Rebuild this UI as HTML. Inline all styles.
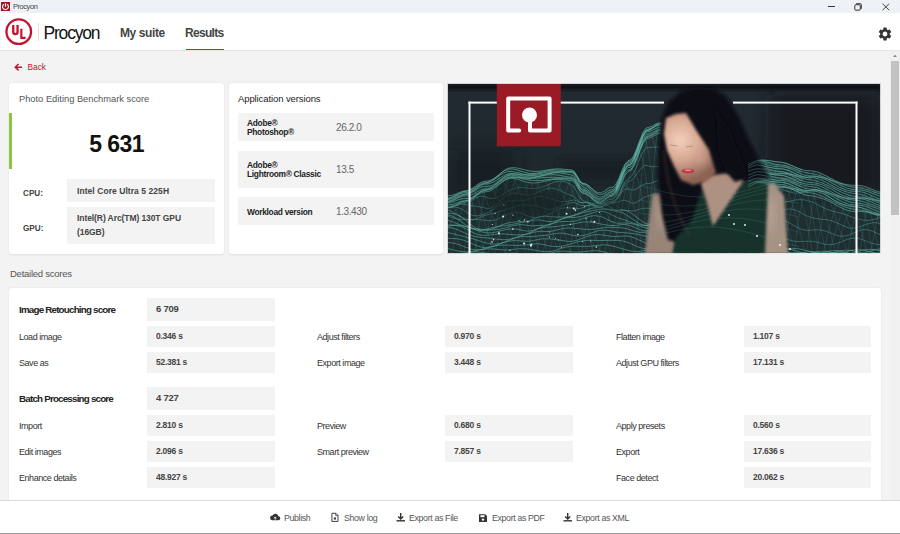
<!DOCTYPE html>
<html><head><meta charset="utf-8">
<style>
*{margin:0;padding:0;box-sizing:border-box}
html,body{width:900px;height:534px;overflow:hidden;background:#f3f3f3;font-family:"Liberation Sans",sans-serif;position:relative}
.a{position:absolute;white-space:nowrap}
#tb{left:0;top:0;width:900px;height:13px;background:#eef2f7}
#hd{left:0;top:13px;width:900px;height:38px;background:#fff;border-bottom:1px solid #e6e6e6}
.card{position:absolute;background:#fff;border-radius:3px;box-shadow:0 0.5px 2px rgba(0,0,0,.09)}
.box{position:absolute;background:#f3f3f3}
.lbl{position:absolute;white-space:nowrap;font-size:9px;color:#333;line-height:11px;letter-spacing:-0.45px;padding-top:0.7px}
.hl{position:absolute;white-space:nowrap;font-size:9.8px;font-weight:bold;color:#222;line-height:12px;letter-spacing:-0.8px}
.val{position:absolute;white-space:nowrap;font-size:8.5px;font-weight:bold;color:#444;line-height:11px;letter-spacing:-0.25px}
#ft{left:0;top:500px;width:900px;height:34px;background:#fff;border-top:1px solid #dcdcdc;border-bottom:1px solid #9a9a9a}
.fl{position:absolute;white-space:nowrap;font-size:8.8px;color:#555;line-height:11px;top:512.5px;letter-spacing:-0.35px}
.av{position:absolute;white-space:nowrap;font-size:8.4px;font-weight:bold;color:#222;line-height:9px;letter-spacing:-0.3px}
.avv{position:absolute;white-space:nowrap;font-size:10px;color:#666;line-height:12px;letter-spacing:-0.4px}
</style></head><body>
<div class="a" id="tb"></div>
<svg class="a" style="left:0;top:0" width="12" height="13" viewBox="0 0 12 13">
<rect x="1" y="2" width="9" height="9" fill="#a8101e"/>
<path d="M3.84 4.3 A2.9 2.9 0 1 0 7.16 4.3" fill="none" stroke="#fff" stroke-width="1.1"/>
<path d="M5.5 3.4 V6.6" stroke="#fff" stroke-width="1.2"/>
</svg>
<div class="a" style="left:13px;top:2px;font-size:7.5px;color:#444;line-height:10px;letter-spacing:-0.45px">Procyon</div>
<div class="a" style="left:828px;top:6px;width:7px;height:1px;background:#333"></div>
<svg class="a" style="left:853px;top:2px" width="10" height="10" viewBox="0 0 10 10">
<rect x="1.8" y="2.7" width="5.5" height="5.5" rx="1" fill="none" stroke="#333" stroke-width="1"/>
<path d="M3.2 1.7 H7.3 A1 1 0 0 1 8.3 2.7 V6.8" fill="none" stroke="#333" stroke-width="1"/>
</svg>
<svg class="a" style="left:881px;top:2px" width="10" height="10" viewBox="0 0 10 10">
<path d="M1.5 1.7 L8.2 8.2 M8.2 1.7 L1.5 8.2" stroke="#333" stroke-width="0.9"/>
</svg>

<div class="a" id="hd"></div>
<svg class="a" style="left:0;top:13px" width="40" height="37" viewBox="0 13 40 37">
<circle cx="18.75" cy="31.65" r="12.3" fill="none" stroke="#c8102e" stroke-width="2.3"/>
<path d="M13.25 24.9 V31.9 A2.15 2.15 0 0 0 17.55 31.9 V24.9" fill="none" stroke="#c8102e" stroke-width="2.3"/>
<path d="M21.35 28.8 V37.9 H25.6" fill="none" stroke="#c8102e" stroke-width="2.1"/>
</svg>
<div class="a" style="left:38px;top:23px;width:1px;height:18px;background:#ddd"></div>
<div class="a" style="left:43.5px;top:20.5px;font-size:17.5px;color:#111;line-height:24px;letter-spacing:-1.2px">Procyon</div>
<div class="a" style="left:120px;top:26px;font-size:12px;font-weight:bold;color:#444;line-height:14px;letter-spacing:-0.4px">My suite</div>
<div class="a" style="left:185px;top:26px;font-size:12px;font-weight:bold;color:#444;line-height:14px;letter-spacing:-0.7px">Results</div>
<div class="a" style="left:185.5px;top:48.8px;width:38.5px;height:1.5px;background:#c92a3e"></div>
<svg class="a" style="left:877px;top:26px" width="16" height="16" viewBox="0 0 24 24">
<path fill="#333" d="M19.14 12.94c.04-.3.06-.61.06-.94 0-.32-.02-.64-.07-.94l2.03-1.58a.49.49 0 0 0 .12-.61l-1.92-3.32a.488.488 0 0 0-.59-.22l-2.39.96c-.5-.38-1.03-.7-1.62-.94l-.36-2.54a.484.484 0 0 0-.48-.41h-3.84c-.24 0-.43.17-.47.41l-.36 2.54c-.59.24-1.13.57-1.62.94l-2.39-.96c-.22-.08-.47 0-.59.22L2.74 8.87c-.12.21-.08.47.12.61l2.03 1.58c-.05.3-.09.63-.09.94s.02.64.07.94l-2.03 1.58a.49.49 0 0 0-.12.61l1.92 3.32c.12.22.37.29.59.22l2.39-.96c.5.38 1.03.7 1.62.94l.36 2.54c.05.24.24.41.48.41h3.84c.24 0 .44-.17.47-.41l.36-2.54c.59-.24 1.13-.56 1.62-.94l2.39.96c.22.08.47 0 .59-.22l1.92-3.32c.12-.22.07-.47-.12-.61l-2.01-1.58zM12 15.6c-1.98 0-3.6-1.62-3.6-3.6s1.62-3.6 3.6-3.6 3.6 1.62 3.6 3.6-1.62 3.6-3.6 3.6z"/>
</svg>

<!-- Back -->
<svg class="a" style="left:13px;top:62px" width="11" height="10" viewBox="0 0 11 10">
<path d="M9 5.2 H2.5 M5.6 2 L2.3 5.2 L5.6 8.4" fill="none" stroke="#c8102e" stroke-width="1.5"/>
</svg>
<div class="a" style="left:27.5px;top:62px;font-size:8.3px;color:#c8102e;line-height:11px">Back</div>

<!-- Card 1 -->
<div class="card" style="left:9px;top:83px;width:215px;height:171px"></div>
<div class="a" style="left:19px;top:94px;font-size:9.3px;color:#555;line-height:11px">Photo Editing Benchmark score</div>
<div class="a" style="left:9px;top:113px;width:3px;height:56px;background:#8cc63f"></div>
<div class="a" style="left:89.3px;top:130.5px;font-size:23px;font-weight:bold;color:#111;line-height:26px;letter-spacing:-0.6px">5 631</div>
<div class="box" style="left:67px;top:179px;width:148px;height:23px"></div>
<div class="box" style="left:67px;top:207px;width:148px;height:37px"></div>
<div class="a" style="left:23px;top:188px;font-size:8.2px;font-weight:bold;color:#444;line-height:11px">CPU:</div>
<div class="a" style="left:23px;top:223px;font-size:8.2px;font-weight:bold;color:#444;line-height:11px">GPU:</div>
<div class="a" style="left:77px;top:185.5px;font-size:8.5px;font-weight:bold;color:#444;line-height:11px;letter-spacing:0.06px">Intel Core Ultra 5 225H</div>
<div class="a" style="left:77px;top:212px;font-size:8.5px;font-weight:bold;color:#444;line-height:13.5px;white-space:normal;width:140px;letter-spacing:-0.08px">Intel(R) Arc(TM) 130T GPU<br>(16GB)</div>

<!-- Card 2 -->
<div class="card" style="left:229px;top:83px;width:214px;height:171px"></div>
<div class="a" style="left:238px;top:93px;font-size:9.5px;color:#222;line-height:11px;letter-spacing:-0.1px">Application versions</div>
<div class="box" style="left:238px;top:113px;width:196px;height:28px"></div>
<div class="box" style="left:238px;top:151px;width:196px;height:37px"></div>
<div class="box" style="left:238px;top:197px;width:196px;height:28px"></div>
<div class="av" style="left:247px;top:118.5px">Adobe®<br>Photoshop®</div>
<div class="avv" style="left:336px;top:122px">26.2.0</div>
<div class="av" style="left:247px;top:160.7px">Adobe®<br>Lightroom® Classic</div>
<div class="avv" style="left:336px;top:164px">13.5</div>
<div class="av" style="left:247px;top:208px">Workload version</div>
<div class="avv" style="left:336px;top:206px">1.3.430</div>

<!-- Image -->
<!--IMG-->
<svg class="a" style="left:447px;top:83px" width="434" height="171" viewBox="0 0 434 171">
<defs><filter id="b1" x="-30%" y="-30%" width="160%" height="160%"><feGaussianBlur stdDeviation="1.5"/></filter><filter id="b2" x="-30%" y="-30%" width="160%" height="160%"><feGaussianBlur stdDeviation="4"/></filter><filter id="b3" x="-50%" y="-50%" width="200%" height="200%"><feGaussianBlur stdDeviation="8"/></filter><linearGradient id="bg" x1="0" y1="0" x2="0" y2="1"><stop offset="0" stop-color="#222b32"/><stop offset="0.5" stop-color="#1f282d"/><stop offset="1" stop-color="#1a2328"/></linearGradient><radialGradient id="fg" gradientUnits="userSpaceOnUse" cx="233" cy="57" r="42"><stop offset="0" stop-color="#f2d0bc"/><stop offset="0.5" stop-color="#d6a690"/><stop offset="1" stop-color="#8c6252"/></radialGradient></defs>
<rect width="434" height="171" fill="url(#bg)"/>
<rect x="0" y="1" width="434" height="6" fill="#0c1118" opacity="0.85" filter="url(#b1)"/>
<rect x="8" y="67" width="60" height="50" fill="#141a22" opacity="0.8" filter="url(#b3)"/>
<rect x="113" y="77" width="100" height="20" fill="#151b20" opacity="0.7" filter="url(#b2)"/>
<rect x="323" y="12" width="110" height="100" fill="#13181d" opacity="0.8" filter="url(#b3)"/>
<polygon points="-5.0,113.8 -1.0,112.8 3.0,112.4 7.0,111.0 11.0,109.2 15.0,107.6 19.0,107.0 23.0,106.1 27.0,103.9 31.0,101.1 35.0,98.9 39.0,98.0 43.0,97.2 47.0,95.1 51.0,92.1 55.0,89.1 59.0,86.7 63.0,85.5 67.0,85.7 71.0,86.3 75.0,87.2 79.0,88.0 83.0,88.4 87.0,88.3 91.0,87.9 95.0,87.2 99.0,86.5 103.0,85.9 107.0,85.5 111.0,85.5 115.0,85.8 119.0,86.2 123.0,86.5 127.0,87.6 131.0,94.2 135.0,99.7 139.0,100.8 143.0,104.0 147.0,108.0 151.0,110.6 155.0,110.6 159.0,108.0 163.0,105.4 167.0,104.1 171.0,97.2 175.0,87.2 179.0,79.1 183.0,76.8 187.0,71.7 191.0,61.9 195.0,51.5 199.0,44.9 203.0,43.7 207.0,41.5 211.0,39.3 215.0,39.3 219.0,41.7 223.0,46.0 227.0,51.5 231.0,57.3 235.0,62.4 239.0,65.8 243.0,67.0 247.0,67.8 251.0,70.0 255.0,73.2 259.0,76.9 263.0,80.5 267.0,83.3 271.0,84.8 275.0,84.9 279.0,84.5 283.0,83.6 287.0,82.6 291.0,81.7 295.0,81.1 299.0,80.9 303.0,79.7 307.0,77.9 311.0,77.0 315.0,77.2 319.0,77.9 323.0,78.7 327.0,79.5 331.0,79.9 335.0,80.1 339.0,80.8 343.0,82.0 347.0,83.6 351.0,85.2 355.0,86.7 359.0,87.7 363.0,88.0 367.0,88.3 371.0,89.1 375.0,90.4 379.0,92.0 383.0,94.0 387.0,96.0 391.0,98.0 395.0,99.8 399.0,101.3 403.0,102.4 407.0,102.9 411.0,103.1 415.0,103.6 419.0,104.6 423.0,105.9 427.0,107.4 431.0,108.8 435.0,110.0 439.0,110.7 440,175 -5,175" fill="#28524f" opacity="0.22"/>
<path d="M-5,113.2 L-2,112.7 L1,112.8 L4,112.6 L7,111.8 L10,110.6 L13,109.3 L16,108.3 L19,107.8 L22,107.2 L25,105.6 L28,103.5 L31,101.2 L34,99.4 L37,98.3 L40,98.1 L43,97.4 L46,96.0 L49,93.9 L52,91.5 L55,89.1 L58,86.9 L61,85.4 L64,84.7 L67,84.7 L70,85.0 L73,85.6 L76,86.4 L79,87.2 L82,87.8 L85,88.2 L88,88.4 L91,88.4 L94,88.1 L97,87.6 L100,87.1 L103,86.6 L106,86.2 L109,85.9 L112,85.9 L115,86.0 L118,86.3 L121,86.6 L124,86.9 L127,88.0 L130,92.8 L133,98.2 L136,100.4 L139,101.0 L142,103.0 L145,105.6 L148,108.1 L151,109.7 L154,109.8 L157,108.3 L160,106.1 L163,104.4 L166,104.1 L169,101.0 L172,94.8 L175,87.4 L178,81.1 L181,77.7 L184,76.6 L187,72.1 L190,64.9 L193,56.7 L196,49.5 L199,45.1 L202,44.2 L205,43.2 L208,41.4 L211,40.0 L214,39.9 L217,41.0 L220,43.3 L223,46.5 L226,50.3 L229,54.3 L232,58.2 L235,61.6 L238,64.1 L241,65.6 L244,65.9 L247,66.8 L250,68.5 L253,71.0 L256,73.9 L259,76.9 L262,79.8 L265,82.2 L268,84.0 L271,85.0 L274,85.1 L277,84.8 L280,84.3 L283,83.7 L286,83.1 L289,82.6 L292,82.2 L295,82.0 L298,82.0 L301,81.5 L304,80.2 L307,78.6 L310,77.5 L313,77.2 L316,77.1 L319,77.3 L322,77.7 L325,78.1 L328,78.6 L331,79.0 L334,79.2 L337,79.8 L340,80.6 L343,81.8 L346,83.1 L349,84.4 L352,85.6 L355,86.6 L358,87.3 L361,87.7 L364,87.8 L367,88.2 L370,88.9 L373,90.0 L376,91.4 L379,92.9 L382,94.5 L385,96.1 L388,97.6 L391,99.0 L394,100.1 L397,101.0 L400,101.7 L403,102.1 L406,102.3 L409,102.3 L412,102.4 L415,102.8 L418,103.6 L421,104.7 L424,105.9 L427,107.1 L430,108.2 L433,109.2 L436,109.9 L439,110.3 M-5,115.9 L-2,115.3 L1,115.1 L4,114.5 L7,113.2 L10,111.7 L13,110.1 L16,108.9 L19,108.4 L22,107.9 L25,106.5 L28,104.6 L31,102.5 L34,100.8 L37,99.7 L40,99.4 L43,98.5 L46,96.8 L49,94.5 L52,92.0 L55,89.5 L58,87.4 L61,86.2 L64,85.8 L67,86.2 L70,86.9 L73,87.9 L76,88.9 L79,89.8 L82,90.4 L85,90.6 L88,90.4 L91,90.0 L94,89.4 L97,88.7 L100,88.0 L103,87.5 L106,87.1 L109,87.1 L112,87.2 L115,87.5 L118,87.9 L121,88.1 L124,88.2 L127,89.1 L130,93.6 L133,98.7 L136,100.7 L139,101.2 L142,103.3 L145,106.2 L148,109.0 L151,111.0 L154,111.5 L157,110.5 L160,108.5 L163,107.0 L166,106.6 L169,103.3 L172,96.8 L175,89.1 L178,82.5 L181,78.9 L184,77.7 L187,73.3 L190,66.2 L193,58.2 L196,51.2 L199,46.9 L202,46.0 L205,44.8 L208,42.9 L211,41.2 L214,40.6 L217,41.4 L220,43.5 L223,46.6 L226,50.4 L229,54.7 L232,58.9 L235,62.7 L238,65.6 L241,67.5 L244,68.1 L247,69.1 L250,70.8 L253,73.2 L256,75.8 L259,78.7 L262,81.3 L265,83.7 L268,85.4 L271,86.5 L274,86.8 L277,86.8 L280,86.5 L283,86.1 L286,85.5 L289,84.9 L292,84.3 L295,83.7 L298,83.4 L301,82.5 L304,80.9 L307,79.2 L310,78.1 L313,78.0 L316,78.2 L319,78.8 L322,79.6 L325,80.4 L328,81.1 L331,81.6 L334,81.9 L337,82.3 L340,82.9 L343,83.9 L346,85.0 L349,86.2 L352,87.4 L355,88.5 L358,89.5 L361,90.1 L364,90.5 L367,91.0 L370,91.7 L373,92.7 L376,93.8 L379,94.9 L382,96.1 L385,97.3 L388,98.5 L391,99.6 L394,100.7 L397,101.7 L400,102.7 L403,103.4 L406,104.0 L409,104.3 L412,104.6 L415,105.2 L418,106.0 L421,106.9 L424,107.9 L427,109.0 L430,109.9 L433,110.9 L436,111.7 L439,112.3 M-5,117.4 L-2,116.4 L1,115.9 L4,115.1 L7,113.8 L10,112.3 L13,110.9 L16,110.0 L19,109.7 L22,109.3 L25,107.9 L28,106.0 L31,103.7 L34,101.8 L37,100.5 L40,99.9 L43,99.0 L46,97.4 L49,95.3 L52,93.0 L55,91.0 L58,89.4 L61,88.5 L64,88.4 L67,88.9 L70,89.6 L73,90.3 L76,91.0 L79,91.5 L82,91.7 L85,91.6 L88,91.3 L91,90.8 L94,90.3 L97,89.7 L100,89.2 L103,88.9 L106,88.7 L109,88.6 L112,88.6 L115,88.7 L118,88.7 L121,88.7 L124,88.6 L127,89.4 L130,93.9 L133,99.2 L136,101.6 L139,102.5 L142,105.0 L145,108.3 L148,111.4 L151,113.6 L154,114.1 L157,112.8 L160,110.6 L163,108.7 L166,108.0 L169,104.5 L172,97.8 L175,90.1 L178,83.6 L181,80.3 L184,79.2 L187,74.9 L190,67.9 L193,59.8 L196,52.6 L199,48.0 L202,46.8 L205,45.3 L208,43.1 L211,41.3 L214,40.8 L217,41.7 L220,44.1 L223,47.6 L226,51.9 L229,56.6 L232,61.1 L235,65.1 L238,68.0 L241,69.7 L244,70.1 L247,70.8 L250,72.3 L253,74.5 L256,77.1 L259,80.0 L262,82.9 L265,85.4 L268,87.4 L271,88.7 L274,89.1 L277,89.0 L280,88.5 L283,87.8 L286,86.8 L289,85.9 L292,85.0 L295,84.3 L298,83.9 L301,83.3 L304,81.9 L307,80.6 L310,80.0 L313,80.2 L316,80.7 L319,81.5 L322,82.3 L325,83.0 L328,83.5 L331,83.8 L334,83.8 L337,84.1 L340,84.7 L343,85.8 L346,87.1 L349,88.5 L352,90.0 L355,91.2 L358,92.2 L361,92.8 L364,92.9 L367,93.0 L370,93.4 L373,93.9 L376,94.6 L379,95.6 L382,96.7 L385,98.0 L388,99.4 L391,100.9 L394,102.4 L397,103.8 L400,105.0 L403,105.9 L406,106.5 L409,106.7 L412,106.8 L415,107.2 L418,107.8 L421,108.7 L424,109.7 L427,110.9 L430,112.1 L433,113.3 L436,114.4 L439,115.2 M-5,117.9 L-2,116.9 L1,116.6 L4,116.0 L7,114.9 L10,113.6 L13,112.3 L16,111.4 L19,111.0 L22,110.3 L25,108.8 L28,106.6 L31,104.3 L34,102.4 L37,101.2 L40,101.0 L43,100.5 L46,99.3 L49,97.6 L52,95.6 L55,93.7 L58,92.0 L61,90.9 L64,90.5 L67,90.6 L70,90.9 L73,91.3 L76,91.8 L79,92.2 L82,92.5 L85,92.5 L88,92.4 L91,92.1 L94,91.7 L97,91.2 L100,90.6 L103,90.1 L106,89.6 L109,89.2 L112,89.0 L115,89.0 L118,89.1 L121,89.2 L124,89.4 L127,90.6 L130,95.6 L133,101.3 L136,104.0 L139,105.1 L142,107.6 L145,110.7 L148,113.6 L151,115.4 L154,115.6 L157,114.0 L160,111.6 L163,109.7 L166,109.0 L169,105.7 L172,99.2 L175,91.7 L178,85.3 L181,81.9 L184,80.7 L187,76.1 L190,68.8 L193,60.4 L196,52.9 L199,48.2 L202,47.0 L205,45.6 L208,43.7 L211,42.3 L214,42.2 L217,43.6 L220,46.3 L223,50.0 L226,54.4 L229,58.9 L232,63.2 L235,66.9 L238,69.5 L241,71.0 L244,71.3 L247,72.0 L250,73.6 L253,76.0 L256,78.9 L259,81.9 L262,84.9 L265,87.4 L268,89.3 L271,90.2 L274,90.3 L277,89.8 L280,89.1 L283,88.2 L286,87.3 L289,86.4 L292,85.9 L295,85.6 L298,85.7 L301,85.5 L304,84.5 L307,83.4 L310,82.7 L313,82.9 L316,83.2 L319,83.7 L322,84.3 L325,84.8 L328,85.3 L331,85.7 L334,85.8 L337,86.3 L340,87.2 L343,88.4 L346,89.8 L349,91.2 L352,92.4 L355,93.3 L358,93.9 L361,94.0 L364,93.8 L367,93.7 L370,93.9 L373,94.5 L376,95.5 L379,96.8 L382,98.3 L385,100.0 L388,101.7 L391,103.4 L394,104.9 L397,106.2 L400,107.2 L403,107.9 L406,108.3 L409,108.4 L412,108.6 L415,109.1 L418,109.9 L421,111.0 L424,112.4 L427,113.7 L430,115.1 L433,116.2 L436,117.1 L439,117.5 M-5,119.0 L-2,118.2 L1,118.0 L4,117.4 L7,116.3 L10,114.8 L13,113.3 L16,112.1 L19,111.6 L22,111.0 L25,109.5 L28,107.6 L31,105.7 L34,104.2 L37,103.5 L40,103.5 L43,103.2 L46,101.9 L49,100.1 L52,97.8 L55,95.4 L58,93.4 L61,91.9 L64,91.3 L67,91.3 L70,91.6 L73,92.2 L76,92.9 L79,93.5 L82,93.9 L85,94.0 L88,93.8 L91,93.4 L94,92.7 L97,92.0 L100,91.2 L103,90.5 L106,90.0 L109,89.8 L112,89.9 L115,90.2 L118,90.7 L121,91.3 L124,91.8 L127,93.2 L130,98.2 L133,103.8 L136,106.2 L139,107.0 L142,109.1 L145,111.9 L148,114.6 L151,116.3 L154,116.5 L157,115.1 L160,112.9 L163,111.2 L166,110.6 L169,107.3 L172,100.7 L175,92.9 L178,86.2 L181,82.5 L184,81.1 L187,76.3 L190,69.0 L193,60.7 L196,53.5 L199,49.2 L202,48.4 L205,47.5 L208,45.9 L211,44.7 L214,44.7 L217,46.0 L220,48.5 L223,51.9 L226,55.9 L229,60.2 L232,64.4 L235,68.0 L238,70.8 L241,72.4 L244,72.9 L247,73.8 L250,75.4 L253,77.8 L256,80.6 L259,83.4 L262,86.0 L265,88.2 L268,89.8 L271,90.6 L274,90.6 L277,90.3 L280,89.8 L283,89.4 L286,88.9 L289,88.5 L292,88.3 L295,88.3 L298,88.5 L301,88.3 L304,87.1 L307,85.7 L310,84.8 L313,84.8 L316,85.0 L319,85.5 L322,86.2 L325,87.0 L328,87.7 L331,88.2 L334,88.5 L337,88.9 L340,89.6 L343,90.5 L346,91.5 L349,92.4 L352,93.3 L355,94.0 L358,94.4 L361,94.7 L364,94.6 L367,94.9 L370,95.5 L373,96.5 L376,97.8 L379,99.3 L382,100.9 L385,102.5 L388,104.1 L391,105.5 L394,106.9 L397,108.0 L400,109.0 L403,109.8 L406,110.4 L409,110.7 L412,111.1 L415,111.8 L418,112.8 L421,113.9 L424,115.0 L427,116.1 L430,117.0 L433,117.7 L436,118.1 L439,118.3 M-5,120.4 L-2,119.5 L1,119.0 L4,118.3 L7,117.0 L10,115.5 L13,114.1 L16,113.2 L19,113.0 L22,112.8 L25,111.7 L28,110.1 L31,108.4 L34,106.9 L37,106.0 L40,105.8 L43,105.0 L46,103.3 L49,101.1 L52,98.5 L55,96.1 L58,94.0 L61,92.7 L64,92.2 L67,92.4 L70,92.9 L73,93.6 L76,94.3 L79,94.8 L82,95.0 L85,94.8 L88,94.4 L91,93.8 L94,93.2 L97,92.5 L100,92.0 L103,91.7 L106,91.6 L109,91.8 L112,92.3 L115,92.8 L118,93.4 L121,93.9 L124,94.1 L127,95.2 L130,99.8 L133,105.0 L136,107.2 L139,107.9 L142,110.0 L145,112.9 L148,115.8 L151,117.7 L154,118.0 L157,116.7 L160,114.4 L163,112.5 L166,111.7 L169,108.0 L172,101.2 L175,93.2 L178,86.4 L181,82.8 L184,81.7 L187,77.3 L190,70.4 L193,62.5 L196,55.7 L199,51.6 L202,50.9 L205,50.0 L208,48.2 L211,46.7 L214,46.4 L217,47.4 L220,49.7 L223,53.0 L226,57.1 L229,61.5 L232,65.8 L235,69.6 L238,72.5 L241,74.2 L244,74.5 L247,75.2 L250,76.5 L253,78.6 L256,81.0 L259,83.6 L262,86.2 L265,88.5 L268,90.4 L271,91.6 L274,92.0 L277,92.2 L280,92.2 L283,92.0 L286,91.6 L289,91.2 L292,90.9 L295,90.7 L298,90.7 L301,90.2 L304,88.9 L307,87.5 L310,86.7 L313,86.8 L316,87.3 L319,88.0 L322,88.8 L325,89.5 L328,90.1 L331,90.3 L334,90.2 L337,90.3 L340,90.6 L343,91.2 L346,92.0 L349,93.0 L352,94.1 L355,95.1 L358,96.0 L361,96.6 L364,96.9 L367,97.4 L370,98.2 L373,99.1 L376,100.3 L379,101.6 L382,102.9 L385,104.4 L388,105.9 L391,107.4 L394,108.9 L397,110.3 L400,111.5 L403,112.5 L406,113.2 L409,113.5 L412,113.8 L415,114.2 L418,114.7 L421,115.4 L424,116.1 L427,116.9 L430,117.6 L433,118.3 L436,118.9 L439,119.4 M-5,121.2 L-2,120.2 L1,119.9 L4,119.3 L7,118.4 L10,117.2 L13,116.2 L16,115.6 L19,115.6 L22,115.4 L25,114.3 L28,112.4 L31,110.3 L34,108.3 L37,107.0 L40,106.5 L43,105.6 L46,103.9 L49,101.7 L52,99.4 L55,97.1 L58,95.3 L61,94.1 L64,93.7 L67,93.8 L70,94.1 L73,94.5 L76,95.0 L79,95.3 L82,95.5 L85,95.4 L88,95.2 L91,95.0 L94,94.7 L97,94.5 L100,94.3 L103,94.3 L106,94.3 L109,94.4 L112,94.6 L115,94.8 L118,95.0 L121,95.1 L124,95.1 L127,96.0 L130,100.6 L133,105.9 L136,108.3 L139,109.1 L142,111.4 L145,114.5 L148,117.3 L151,119.0 L154,119.1 L157,117.5 L160,114.9 L163,112.8 L166,111.9 L169,108.3 L172,101.7 L175,94.1 L178,87.8 L181,84.7 L184,83.9 L187,79.8 L190,72.9 L193,65.1 L196,58.1 L199,53.7 L202,52.6 L205,51.4 L208,49.3 L211,47.7 L214,47.4 L217,48.6 L220,51.0 L223,54.5 L226,58.7 L229,63.2 L232,67.5 L235,71.0 L238,73.6 L241,74.9 L244,75.0 L247,75.4 L250,76.6 L253,78.7 L256,81.4 L259,84.5 L262,87.5 L265,90.3 L268,92.6 L271,94.1 L274,94.7 L277,94.9 L280,94.7 L283,94.3 L286,93.7 L289,93.1 L292,92.6 L295,92.4 L298,92.4 L301,92.2 L304,91.0 L307,89.8 L310,89.2 L313,89.3 L316,89.7 L319,90.1 L322,90.6 L325,90.9 L328,91.1 L331,91.1 L334,90.8 L337,90.9 L340,91.4 L343,92.3 L346,93.5 L349,95.0 L352,96.4 L355,97.7 L358,98.7 L361,99.3 L364,99.5 L367,99.8 L370,100.3 L373,101.1 L376,102.1 L379,103.4 L382,104.9 L385,106.5 L388,108.3 L391,110.0 L394,111.6 L397,113.0 L400,114.1 L403,114.8 L406,115.2 L409,115.1 L412,114.9 L415,115.0 L418,115.3 L421,116.0 L424,116.8 L427,117.8 L430,119.0 L433,120.0 L436,121.0 L439,121.7 M-5,122.5 L-2,121.9 L1,121.9 L4,121.7 L7,121.0 L10,119.9 L13,118.8 L16,117.9 L19,117.5 L22,116.9 L25,115.3 L28,113.1 L31,110.8 L34,108.8 L37,107.6 L40,107.2 L43,106.5 L46,105.1 L49,103.1 L52,100.8 L55,98.5 L58,96.5 L61,95.1 L64,94.5 L67,94.4 L70,94.7 L73,95.2 L76,95.8 L79,96.5 L82,97.0 L85,97.4 L88,97.6 L91,97.6 L94,97.4 L97,97.1 L100,96.7 L103,96.3 L106,95.9 L109,95.7 L112,95.6 L115,95.6 L118,95.7 L121,95.9 L124,96.0 L127,97.2 L130,101.9 L133,107.4 L136,109.7 L139,110.5 L142,112.6 L145,115.3 L148,117.9 L151,119.4 L154,119.4 L157,117.9 L160,115.5 L163,113.7 L166,113.3 L169,110.1 L172,103.9 L175,96.6 L178,90.4 L181,87.2 L184,86.3 L187,81.9 L190,74.7 L193,66.5 L196,59.2 L199,54.7 L202,53.6 L205,52.4 L208,50.6 L211,49.2 L214,49.0 L217,50.2 L220,52.6 L223,56.0 L226,59.9 L229,64.0 L232,68.0 L235,71.3 L238,73.8 L241,75.1 L244,75.3 L247,76.0 L250,77.7 L253,80.3 L256,83.5 L259,86.8 L262,90.1 L265,92.9 L268,95.0 L271,96.3 L274,96.7 L277,96.6 L280,96.3 L283,95.8 L286,95.3 L289,94.8 L292,94.6 L295,94.6 L298,94.8 L301,94.6 L304,93.4 L307,92.0 L310,91.0 L313,90.8 L316,90.7 L319,90.9 L322,91.2 L325,91.5 L328,91.9 L331,92.1 L334,92.3 L337,92.7 L340,93.7 L343,94.9 L346,96.3 L349,97.7 L352,99.1 L355,100.1 L358,100.9 L361,101.3 L364,101.3 L367,101.6 L370,102.2 L373,103.1 L376,104.4 L379,105.9 L382,107.5 L385,109.2 L388,110.9 L391,112.3 L394,113.6 L397,114.6 L400,115.3 L403,115.7 L406,115.8 L409,115.6 L412,115.6 L415,115.9 L418,116.7 L421,117.7 L424,118.9 L427,120.2 L430,121.5 L433,122.5 L436,123.4 L439,123.9 M-5,125.1 L-2,124.6 L1,124.5 L4,124.0 L7,122.9 L10,121.4 L13,119.9 L16,118.6 L19,118.0 L22,117.3 L25,115.8 L28,113.8 L31,111.7 L34,109.9 L37,108.9 L40,108.7 L43,108.0 L46,106.4 L49,104.2 L52,101.7 L55,99.2 L58,97.2 L61,95.8 L64,95.3 L67,95.5 L70,96.2 L73,97.1 L76,98.1 L79,99.0 L82,99.7 L85,100.0 L88,100.0 L91,99.7 L94,99.1 L97,98.4 L100,97.7 L103,97.1 L106,96.6 L109,96.4 L112,96.4 L115,96.7 L118,97.0 L121,97.3 L124,97.5 L127,98.6 L130,103.2 L133,108.4 L136,110.4 L139,111.0 L142,113.0 L145,115.7 L148,118.5 L151,120.3 L154,120.7 L157,119.6 L160,117.7 L163,116.2 L166,115.9 L169,112.7 L172,106.4 L175,98.8 L178,92.2 L181,88.7 L184,87.4 L187,82.8 L190,75.6 L193,67.5 L196,60.4 L199,56.0 L202,55.1 L205,54.0 L208,52.2 L211,50.6 L214,50.2 L217,51.1 L220,53.2 L223,56.3 L226,60.1 L229,64.2 L232,68.3 L235,72.0 L238,74.8 L241,76.6 L244,77.3 L247,78.3 L250,80.2 L253,82.9 L256,85.9 L259,89.1 L262,92.0 L265,94.6 L268,96.5 L271,97.7 L274,98.1 L277,98.2 L280,98.0 L283,97.8 L286,97.4 L289,97.1 L292,96.8 L295,96.7 L298,96.6 L301,96.1 L304,94.5 L307,92.8 L310,91.6 L313,91.4 L316,91.5 L319,91.9 L322,92.6 L325,93.4 L328,94.1 L331,94.7 L334,95.1 L337,95.6 L340,96.4 L343,97.4 L346,98.6 L349,99.8 L352,100.9 L355,101.9 L358,102.7 L361,103.3 L364,103.5 L367,104.0 L370,104.7 L373,105.8 L376,107.0 L379,108.2 L382,109.6 L385,110.9 L388,112.1 L391,113.2 L394,114.2 L397,115.1 L400,115.9 L403,116.6 L406,117.0 L409,117.3 L412,117.6 L415,118.3 L418,119.2 L421,120.3 L424,121.4 L427,122.5 L430,123.6 L433,124.5 L436,125.2 L439,125.7 M301,96.7 L304,95.2 L307,93.8 L310,93.0 L313,93.2 L316,93.7 L319,94.5 L322,95.4 L325,96.3 L328,97.0 L331,97.3 L334,97.4 L337,97.7 L340,98.3 L343,99.2 L346,100.4 L349,101.7 L352,103.0 L355,104.2 L358,105.2 L361,105.8 L364,106.1 L367,106.3 L370,106.8 L373,107.4 L376,108.2 L379,109.1 L382,110.2 L385,111.4 L388,112.7 L391,114.1 L394,115.4 L397,116.8 L400,118.0 L403,118.9 L406,119.6 L409,120.0 L412,120.2 L415,120.7 L418,121.4 L421,122.3 L424,123.3 L427,124.3 L430,125.4 L433,126.5 L436,127.5 L439,128.2 M301,98.5 L304,97.5 L307,96.4 L310,95.9 L313,96.1 L316,96.6 L319,97.2 L322,97.9 L325,98.5 L328,98.9 L331,99.1 L334,99.2 L337,99.5 L340,100.3 L343,101.4 L346,102.8 L349,104.2 L352,105.5 L355,106.6 L358,107.3 L361,107.5 L364,107.4 L367,107.3 L370,107.5 L373,108.0 L376,108.8 L379,110.0 L382,111.4 L385,113.0 L388,114.7 L391,116.4 L394,118.1 L397,119.5 L400,120.6 L403,121.5 L406,121.9 L409,122.0 L412,122.1 L415,122.5 L418,123.2 L421,124.2 L424,125.4 L427,126.8 L430,128.1 L433,129.3 L436,130.2 L439,130.8 M301,101.5 L304,100.5 L307,99.2 L310,98.4 L313,98.4 L316,98.6 L319,99.0 L322,99.6 L325,100.2 L328,100.8 L331,101.2 L334,101.5 L337,101.9 L340,102.7 L343,103.7 L346,104.9 L349,105.9 L352,106.9 L355,107.6 L358,108.0 L361,108.1 L364,108.0 L367,108.1 L370,108.6 L373,109.5 L376,110.8 L379,112.3 L382,114.0 L385,115.8 L388,117.5 L391,119.1 L394,120.5 L397,121.6 L400,122.6 L403,123.3 L406,123.7 L409,124.0 L412,124.2 L415,124.9 L418,125.8 L421,126.9 L424,128.1 L427,129.3 L430,130.4 L433,131.2 L436,131.7 L439,131.9 M301,103.8 L304,102.5 L307,101.0 L310,100.1 L313,100.1 L316,100.4 L319,101.0 L322,101.8 L325,102.5 L328,103.2 L331,103.5 L334,103.6 L337,103.7 L340,104.2 L343,104.8 L346,105.6 L349,106.5 L352,107.5 L355,108.4 L358,109.1 L361,109.6 L364,109.9 L367,110.4 L370,111.3 L373,112.4 L376,113.6 L379,115.1 L382,116.5 L385,118.0 L388,119.5 L391,120.9 L394,122.3 L397,123.5 L400,124.6 L403,125.5 L406,126.2 L409,126.5 L412,126.9 L415,127.4 L418,128.1 L421,128.9 L424,129.7 L427,130.5 L430,131.2 L433,131.8 L436,132.3 L439,132.6 M301,105.4 L304,104.2 L307,102.9 L310,102.2 L313,102.3 L316,102.7 L319,103.3 L322,103.9 L325,104.4 L328,104.7 L331,104.7 L334,104.4 L337,104.4 L340,104.8 L343,105.6 L346,106.7 L349,108.0 L352,109.4 L355,110.7 L358,111.8 L361,112.5 L364,112.8 L367,113.2 L370,113.9 L373,114.7 L376,115.7 L379,116.9 L382,118.3 L385,119.8 L388,121.4 L391,123.0 L394,124.6 L397,126.0 L400,127.2 L403,128.0 L406,128.5 L409,128.5 L412,128.4 L415,128.6 L418,128.9 L421,129.5 L424,130.2 L427,131.1 L430,132.1 L433,133.1 L436,134.0 L439,134.7" fill="none" stroke="#6ccab9" stroke-width="0.7" opacity="0.75"/>
<path d="M-5,123.9 L-2,123.3 L1,123.3 L4,123.3 L7,122.8 L10,121.9 L13,120.8 L16,119.9 L19,119.2 L22,118.4 L25,117.0 L28,115.4 L31,114.0 L34,113.2 L37,113.4 L40,114.5 L43,115.4 L46,115.5 L49,114.9 L52,113.7 L55,111.9 L58,110.0 L61,108.2 L64,106.7 L67,105.7 L70,104.9 L73,104.6 L76,104.6 L79,104.9 L82,105.3 L85,105.4 L88,105.4 L91,105.1 L94,104.4 L97,103.5 L100,102.3 L103,101.0 L106,99.7 L109,98.7 L112,98.2 L115,98.3 L118,98.9 L121,100.1 L124,101.5 L127,103.8 L130,109.1 L133,114.8 L136,117.5 L139,118.5 L142,120.1 L145,122.0 L148,123.6 L151,124.2 L154,123.7 L157,122.0 L160,120.0 L163,118.6 L166,118.4 L169,116.0 L172,110.8 L175,104.5 L178,98.9 L181,95.6 L184,93.9 L187,89.4 L190,82.5 L193,75.0 L196,68.6 L199,64.8 L202,64.4 L205,64.2 L208,63.9 L211,64.1 L214,65.5 L217,67.9 L220,71.1 L223,74.7 L226,78.5 L229,82.2 L232,85.5 L235,88.2 L238,90.3 L241,91.5 L244,92.0 L247,92.9 L250,94.7 L253,97.0 L256,99.5 L259,101.9 L262,103.9 L265,105.2 L268,105.7 L271,105.3 L274,104.2 L277,102.9 L280,101.7 L283,100.9 L286,100.5 L289,100.6 L292,101.2 L295,102.2 L298,103.5 L301,104.3 L304,104.2 L307,103.6 L310,103.2 L313,103.0 L316,102.9 L319,103.0 L322,103.3 L325,103.8 L328,104.5 L331,105.3 L334,106.1 L337,107.0 L340,108.1 L343,109.1 L346,109.8 L349,110.2 L352,110.1 L355,109.6 L358,108.8 L361,107.7 L364,106.8 L367,106.3 L370,106.7 L373,107.7 L376,109.4 L379,111.5 L382,113.7 L385,116.0 L388,118.0 L391,119.6 L394,120.9 L397,121.7 L400,122.3 L403,122.7 L406,123.0 L409,123.4 L412,124.0 L415,125.2 L418,126.7 L421,128.3 L424,129.9 L427,131.2 L430,131.9 L433,132.1 L436,131.7 L439,130.8 M-5,125.7 L-2,125.4 L1,125.1 L4,124.5 L7,123.5 L10,122.3 L13,121.4 L16,121.0 L19,121.4 L22,122.2 L25,122.7 L28,123.2 L31,123.6 L34,124.1 L37,124.8 L40,125.4 L43,125.3 L46,124.0 L49,121.8 L52,119.1 L55,116.2 L58,113.6 L61,111.6 L64,110.5 L67,110.1 L70,110.3 L73,110.8 L76,111.5 L79,112.0 L82,112.1 L85,111.6 L88,110.5 L91,109.2 L94,107.8 L97,106.6 L100,105.7 L103,105.2 L106,105.3 L109,105.8 L112,106.9 L115,108.3 L118,109.9 L121,111.3 L124,112.3 L127,113.4 L130,116.4 L133,119.3 L136,119.8 L139,119.2 L142,119.6 L145,120.6 L148,121.9 L151,122.9 L154,123.2 L157,122.7 L160,121.6 L163,120.8 L166,120.5 L169,117.9 L172,112.9 L175,106.8 L178,101.5 L181,98.6 L184,97.5 L187,94.8 L190,90.8 L193,86.7 L196,83.5 L199,82.2 L202,83.2 L205,83.8 L208,83.7 L211,83.5 L214,83.8 L217,84.7 L220,86.3 L223,88.4 L226,91.1 L229,94.2 L232,97.4 L235,100.5 L238,103.2 L241,105.0 L244,105.9 L247,106.8 L250,107.7 L253,108.6 L256,109.4 L259,110.1 L262,110.7 L265,111.1 L268,111.6 L271,111.9 L274,112.3 L277,113.0 L280,113.9 L283,115.0 L286,116.1 L289,117.1 L292,117.9 L295,118.4 L298,118.8 L301,118.5 L304,117.4 L307,116.2 L310,115.4 L313,115.3 L316,115.6 L319,116.4 L322,117.4 L325,118.4 L328,119.3 L331,119.8 L334,119.7 L337,119.3 L340,118.8 L343,118.1 L346,117.5 L349,117.0 L352,116.7 L355,116.8 L358,117.1 L361,117.8 L364,118.6 L367,119.8 L370,121.3 L373,123.0 L376,124.5 L379,125.9 L382,127.0 L385,127.9 L388,128.7 L391,129.4 L394,130.2 L397,131.1 L400,132.2 L403,133.3 L406,134.5 L409,135.4 L412,136.2 L415,136.9 L418,137.3 L421,137.3 L424,137.0 L427,136.4 L430,135.6 L433,134.8 L436,134.1 L439,133.6 M-5,126.3 L-2,125.3 L1,124.7 L4,124.3 L7,124.1 L10,124.4 L13,125.3 L16,126.8 L19,128.8 L22,130.9 L25,132.2 L28,132.8 L31,132.7 L34,132.1 L37,131.2 L40,130.1 L43,128.5 L46,126.4 L49,124.2 L52,122.0 L55,120.2 L58,118.8 L61,118.1 L64,117.8 L67,117.8 L70,117.9 L73,117.8 L76,117.6 L79,117.1 L82,116.3 L85,115.2 L88,114.2 L91,113.4 L94,113.2 L97,113.6 L100,114.5 L103,115.5 L106,116.6 L109,117.5 L112,118.2 L115,118.5 L118,118.5 L121,118.2 L124,117.5 L127,116.9 L130,118.0 L133,119.5 L136,119.7 L139,119.5 L142,120.2 L145,121.6 L148,123.0 L151,123.9 L154,123.9 L157,123.0 L160,121.5 L163,120.1 L166,119.2 L169,116.8 L172,113.0 L175,109.0 L178,106.2 L181,105.7 L184,106.9 L187,106.8 L190,105.6 L193,103.6 L196,101.8 L199,100.6 L202,100.6 L205,99.8 L208,98.6 L211,97.5 L214,97.1 L217,97.8 L220,99.4 L223,101.9 L226,105.0 L229,108.4 L232,111.6 L235,114.4 L238,116.3 L241,117.2 L244,117.0 L247,116.6 L250,116.4 L253,116.3 L256,116.7 L259,117.7 L262,119.2 L265,121.1 L268,123.2 L271,125.2 L274,127.0 L277,128.6 L280,129.8 L283,130.6 L286,130.9 L289,130.8 L292,130.5 L295,130.2 L298,130.0 L301,129.8 L304,129.4 L307,129.1 L310,129.3 L313,129.8 L316,130.5 L319,131.0 L322,131.2 L325,131.0 L328,130.4 L331,129.3 L334,128.0 L337,126.9 L340,126.2 L343,126.0 L346,126.4 L349,127.4 L352,128.8 L355,130.4 L358,132.1 L361,133.5 L364,134.4 L367,135.2 L370,135.7 L373,136.1 L376,136.4 L379,136.7 L382,137.2 L385,138.0 L388,139.0 L391,140.3 L394,141.8 L397,143.2 L400,144.4 L403,145.1 L406,145.3 L409,144.9 L412,144.1 L415,143.0 L418,141.8 L421,140.8 L424,140.1 L427,139.7 L430,139.8 L433,140.4 L436,141.3 L439,142.3 M-5,126.2 L-2,126.3 L1,127.0 L4,128.2 L7,129.7 L10,131.3 L13,133.0 L16,134.6 L19,136.1 L22,136.9 L25,137.0 L28,136.3 L31,135.2 L34,133.9 L37,132.7 L40,131.9 L43,131.1 L46,130.3 L49,129.5 L52,128.6 L55,127.7 L58,126.8 L61,125.8 L64,124.9 L67,123.9 L70,123.0 L73,122.3 L76,121.9 L79,121.9 L82,122.0 L85,122.3 L88,122.7 L91,123.4 L94,124.3 L97,125.4 L100,126.2 L103,126.4 L106,126.0 L109,125.1 L112,123.8 L115,122.5 L118,121.3 L121,120.4 L124,119.7 L127,119.5 L130,120.6 L133,122.1 L136,122.6 L139,122.5 L142,122.6 L145,122.9 L148,122.8 L151,122.4 L154,121.5 L157,120.3 L160,119.3 L163,119.0 L166,119.5 L169,119.5 L172,118.6 L175,117.5 L178,117.2 L181,118.2 L184,119.8 L187,120.1 L190,119.1 L193,117.2 L196,115.1 L199,113.5 L202,112.7 L205,111.7 L208,110.9 L211,110.8 L214,111.4 L217,112.9 L220,115.0 L223,117.3 L226,119.7 L229,121.8 L232,123.6 L235,124.8 L238,125.4 L241,125.6 L244,125.5 L247,125.7 L250,126.4 L253,127.7 L256,129.6 L259,131.9 L262,134.4 L265,136.8 L268,138.9 L271,140.4 L274,141.3 L277,141.7 L280,141.7 L283,141.5 L286,141.3 L289,141.2 L292,141.4 L295,141.8 L298,142.5 L301,143.2 L304,143.5 L307,143.5 L310,143.3 L313,142.8 L316,142.1 L319,141.1 L322,139.9 L325,138.8 L328,137.9 L331,137.4 L334,137.2 L337,137.7 L340,138.7 L343,140.3 L346,142.0 L349,143.7 L352,145.3 L355,146.4 L358,147.1 L361,147.3 L364,147.1 L367,146.8 L370,146.7 L373,146.9 L376,147.4 L379,148.3 L382,149.4 L385,150.6 L388,151.8 L391,152.7 L394,153.2 L397,153.2 L400,152.6 L403,151.6 L406,150.3 L409,148.9 L412,147.6 L415,146.8 L418,146.6 L421,146.9 L424,147.7 L427,148.9 L430,150.3 L433,151.6 L436,152.7 L439,153.4 M-5,130.9 L-2,132.1 L1,133.3 L4,134.4 L7,135.3 L10,136.0 L13,136.3 L16,136.5 L19,136.6 L22,136.6 L25,136.5 L28,136.5 L31,136.6 L34,136.8 L37,137.1 L40,137.5 L43,137.6 L46,137.4 L49,136.7 L52,135.6 L55,134.2 L58,132.6 L61,131.2 L64,130.0 L67,129.3 L70,129.2 L73,129.7 L76,130.7 L79,132.2 L82,133.4 L85,134.1 L88,134.4 L91,134.3 L94,133.8 L97,133.2 L100,132.3 L103,130.8 L106,129.1 L109,127.5 L112,126.1 L115,125.2 L118,124.8 L121,124.8 L124,125.0 L127,125.1 L130,125.5 L133,125.5 L136,124.7 L139,123.4 L142,122.2 L145,121.2 L148,120.5 L151,120.2 L154,120.3 L157,120.9 L160,122.1 L163,124.0 L166,126.1 L169,127.6 L172,128.0 L175,127.7 L178,127.4 L181,127.5 L184,127.9 L187,127.7 L190,127.0 L193,126.1 L196,125.4 L199,125.2 L202,125.4 L205,125.5 L208,125.8 L211,126.3 L214,127.0 L217,127.9 L220,128.8 L223,129.6 L226,130.6 L229,131.5 L232,132.7 L235,134.0 L238,135.6 L241,137.3 L244,139.1 L247,141.1 L250,143.2 L253,145.1 L256,146.8 L259,148.3 L262,149.5 L265,150.2 L268,150.6 L271,150.8 L274,150.8 L277,150.9 L280,151.2 L283,151.8 L286,152.6 L289,153.5 L292,154.4 L295,155.2 L298,155.6 L301,155.6 L304,154.9 L307,153.8 L310,152.5 L313,151.2 L316,150.1 L319,149.4 L322,149.2 L325,149.6 L328,150.5 L331,151.7 L334,153.2 L337,154.7 L340,156.1 L343,157.2 L346,158.0 L349,158.4 L352,158.5 L355,158.4 L358,158.3 L361,158.2 L364,158.2 L367,158.6 L370,159.2 L373,160.0 L376,160.8 L379,161.4 L382,161.7 L385,161.6 L388,161.1 L391,160.2 L394,159.0 L397,157.7 L400,156.5 L403,155.6 L406,155.2 L409,155.2 L412,155.6 L415,156.5 L418,157.7 L421,158.9 L424,160.0 L427,160.9 L430,161.4 L433,161.6 L436,161.6 L439,161.4" fill="none" stroke="#5fb8a9" stroke-width="0.65" opacity="0.6"/>
<path d="M-5,130.5 L-2,130.4 L1,130.2 L4,130.3 L7,130.9 L10,131.9 L13,133.4 L16,135.4 L19,137.6 L22,140.1 L25,142.5 L28,144.6 L31,146.3 L34,147.4 L37,147.8 L40,147.6 L43,146.8 L46,145.7 L49,144.5 L52,143.1 L55,141.9 L58,140.8 L61,140.0 L64,139.4 L67,139.0 L70,138.8 L73,138.6 L76,138.5 L79,138.3 L82,137.7 L85,136.6 L88,135.3 L91,134.1 L94,133.3 L97,133.2 L100,133.5 L103,133.7 L106,133.8 L109,134.0 L112,134.0 L115,134.0 L118,134.0 L121,133.9 L124,133.5 L127,132.7 L130,131.5 L133,130.0 L136,128.5 L139,127.2 L142,126.0 L145,125.2 L148,124.8 L151,124.7 L154,124.8 L157,125.2 L160,125.8 L163,126.5 L166,127.0 L169,127.2 L172,127.1 L175,126.8 L178,127.2 L181,128.2 L184,129.9 L187,132.1 L190,134.4 L193,136.8 L196,138.9 L199,140.5 L202,141.4 L205,141.6 L208,141.9 L211,142.3 L214,142.7 L217,143.4 L220,144.3 L223,145.5 L226,147.0 L229,148.6 L232,150.4 L235,152.2 L238,153.8 L241,155.0 L244,155.9 L247,156.3 L250,156.2 L253,155.7 L256,155.1 L259,154.8 L262,154.7 L265,155.1 L268,155.9 L271,157.0 L274,158.5 L277,160.1 L280,161.7 L283,163.2 L286,164.5 L289,165.6 L292,166.3 L295,166.7 L298,167.0 L301,167.1 L304,167.2 L307,167.3 L310,167.5 L313,167.6 L316,167.9 L319,168.2 L322,168.4 L325,168.5 L328,168.4 L331,168.1 L334,167.6 L337,167.0 L340,166.4 L343,165.9 L346,165.7 L349,165.6 L352,165.9 L355,166.5 L358,167.2 L361,168.0 L364,168.8 L367,169.5 L370,170.1 L373,170.3 L376,170.4 L379,170.2 L382,170.0 L385,169.8 L388,169.6 L391,169.6 L394,169.7 L397,170.0 L400,170.3 L403,170.7 L406,170.9 L409,170.9 L412,170.7 L415,170.2 L418,169.5 L421,168.7 L424,167.8 L427,167.0 L430,166.4 L433,166.1 L436,166.1 L439,166.4 M-5,132.0 L-2,131.9 L1,132.0 L4,132.7 L7,133.9 L10,135.7 L13,137.7 L16,139.9 L19,142.0 L22,143.9 L25,145.4 L28,146.5 L31,147.0 L34,147.0 L37,146.6 L40,145.9 L43,145.2 L46,144.5 L49,143.9 L52,143.4 L55,143.0 L58,142.6 L61,142.1 L64,141.6 L67,141.0 L70,140.4 L73,139.7 L76,139.2 L79,138.9 L82,138.4 L85,137.8 L88,137.2 L91,136.9 L94,137.1 L97,137.7 L100,138.4 L103,138.6 L106,138.4 L109,137.8 L112,136.9 L115,135.8 L118,134.7 L121,133.8 L124,133.0 L127,132.1 L130,131.2 L133,130.4 L136,129.6 L139,128.9 L142,128.3 L145,127.7 L148,127.2 L151,126.8 L154,126.4 L157,126.3 L160,126.5 L163,127.0 L166,127.6 L169,128.4 L172,129.0 L175,129.7 L178,131.1 L181,132.9 L184,135.1 L187,137.2 L190,139.3 L193,140.9 L196,142.0 L199,142.5 L202,142.3 L205,141.8 L208,141.7 L211,141.9 L214,142.5 L217,143.6 L220,145.0 L223,146.7 L226,148.4 L229,150.0 L232,151.5 L235,152.7 L238,153.6 L241,154.3 L244,154.6 L247,154.8 L250,154.9 L253,155.0 L256,155.3 L259,156.0 L262,157.1 L265,158.3 L268,159.7 L271,161.1 L274,162.3 L277,163.3 L280,164.0 L283,164.6 L286,164.9 L289,165.2 L292,165.6 L295,165.9 L298,166.4 L301,166.9 L304,167.5 L307,168.0 L310,168.3 L313,168.4 L316,168.2 L319,167.9 L322,167.4 L325,166.7 L328,166.1 L331,165.6 L334,165.3 L337,165.3 L340,165.6 L343,166.2 L346,167.0 L349,167.9 L352,168.9 L355,169.7 L358,170.4 L361,170.7 L364,170.8 L367,170.7 L370,170.5 L373,170.2 L376,170.0 L379,169.9 L382,169.9 L385,170.1 L388,170.4 L391,170.7 L394,171.0 L397,171.0 L400,170.9 L403,170.4 L406,169.8 L409,169.0 L412,168.1 L415,167.3 L418,166.7 L421,166.4 L424,166.3 L427,166.6 L430,167.2 L433,167.8 L436,168.6 L439,169.2 M-5,135.8 L-2,136.4 L1,137.2 L4,138.2 L7,139.4 L10,140.6 L13,141.8 L16,142.9 L19,143.8 L22,144.5 L25,145.1 L28,145.6 L31,145.9 L34,146.2 L37,146.5 L40,146.6 L43,146.7 L46,146.7 L49,146.6 L52,146.3 L55,145.7 L58,145.0 L61,144.1 L64,143.2 L67,142.4 L70,141.9 L73,141.6 L76,141.7 L79,142.2 L82,142.6 L85,142.8 L88,142.7 L91,142.6 L94,142.4 L97,142.3 L100,142.0 L103,141.2 L106,140.0 L109,138.5 L112,137.1 L115,135.9 L118,135.1 L121,134.8 L124,134.7 L127,134.5 L130,134.2 L133,133.7 L136,133.0 L139,132.1 L142,131.1 L145,130.1 L148,129.2 L151,128.5 L154,128.3 L157,128.6 L160,129.5 L163,130.9 L166,132.4 L169,134.0 L172,135.2 L175,136.1 L178,137.1 L181,138.2 L184,139.4 L187,140.4 L190,141.3 L193,142.0 L196,142.4 L199,142.7 L202,142.8 L205,142.7 L208,143.1 L211,143.8 L214,144.8 L217,146.0 L220,147.2 L223,148.3 L226,149.3 L229,150.3 L232,151.2 L235,152.1 L238,153.1 L241,154.1 L244,155.2 L247,156.4 L250,157.5 L253,158.6 L256,159.5 L259,160.5 L262,161.4 L265,162.1 L268,162.6 L271,162.9 L274,163.2 L277,163.4 L280,163.6 L283,164.0 L286,164.5 L289,165.1 L292,165.9 L295,166.7 L298,167.4 L301,167.9 L304,168.1 L307,168.0 L310,167.7 L313,167.0 L316,166.3 L319,165.7 L322,165.3 L325,165.2 L328,165.4 L331,165.9 L334,166.7 L337,167.7 L340,168.7 L343,169.7 L346,170.4 L349,170.9 L352,171.2 L355,171.2 L358,171.0 L361,170.7 L364,170.5 L367,170.3 L370,170.3 L373,170.4 L376,170.7 L379,170.9 L382,171.2 L385,171.3 L388,171.1 L391,170.7 L394,170.1 L397,169.4 L400,168.5 L403,167.7 L406,167.1 L409,166.7 L412,166.7 L415,167.0 L418,167.5 L421,168.2 L424,168.9 L427,169.6 L430,170.2 L433,170.5 L436,170.7 L439,170.6 M-5,141.6 L-2,142.0 L1,142.0 L4,142.0 L7,142.1 L10,142.2 L13,142.4 L16,142.8 L19,143.5 L22,144.3 L25,145.4 L28,146.6 L31,147.7 L34,148.7 L37,149.5 L40,149.8 L43,149.8 L46,149.6 L49,149.0 L52,148.3 L55,147.5 L58,146.8 L61,146.2 L64,145.9 L67,145.9 L70,146.2 L73,146.7 L76,147.4 L79,148.0 L82,148.1 L85,147.7 L88,146.7 L91,145.5 L94,144.3 L97,143.4 L100,142.5 L103,141.5 L106,140.5 L109,139.6 L112,138.9 L115,138.5 L118,138.4 L121,138.5 L124,138.5 L127,138.2 L130,137.5 L133,136.6 L136,135.5 L139,134.4 L142,133.5 L145,132.9 L148,132.7 L151,133.0 L154,133.7 L157,134.8 L160,136.3 L163,137.8 L166,139.1 L169,140.0 L172,140.3 L175,140.1 L178,140.0 L181,140.2 L184,140.6 L187,141.3 L190,142.2 L193,143.2 L196,144.2 L199,145.0 L202,145.5 L205,145.7 L208,146.0 L211,146.3 L214,146.8 L217,147.2 L220,147.8 L223,148.6 L226,149.6 L229,150.8 L232,152.4 L235,154.1 L238,156.0 L241,157.9 L244,159.7 L247,161.1 L250,162.2 L253,162.7 L256,162.8 L259,162.8 L262,162.7 L265,162.5 L268,162.5 L271,162.5 L274,162.8 L277,163.3 L280,164.0 L283,164.8 L286,165.6 L289,166.3 L292,166.8 L295,167.1 L298,167.1 L301,166.9 L304,166.5 L307,166.1 L310,165.8 L313,165.6 L316,165.6 L319,166.0 L322,166.7 L325,167.6 L328,168.6 L331,169.6 L334,170.4 L337,171.0 L340,171.3 L343,171.4 L346,171.3 L349,171.0 L352,170.8 L355,170.7 L358,170.6 L361,170.7 L364,170.9 L367,171.2 L370,171.4 L373,171.5 L376,171.4 L379,171.1 L382,170.6 L385,169.8 L388,169.0 L391,168.2 L394,167.6 L397,167.2 L400,167.1 L403,167.4 L406,167.9 L409,168.6 L412,169.3 L415,170.1 L418,170.7 L421,171.1 L424,171.3 L427,171.3 L430,171.1 L433,170.9 L436,170.7 L439,170.6 M-5,144.9 L-2,144.1 L1,143.3 L4,142.6 L7,142.4 L10,142.6 L13,143.3 L16,144.5 L19,145.9 L22,147.5 L25,149.0 L28,150.4 L31,151.5 L34,152.1 L37,152.4 L40,152.2 L43,151.9 L46,151.5 L49,151.2 L52,151.0 L55,150.9 L58,151.0 L61,151.3 L64,151.5 L67,151.8 L70,151.9 L73,151.8 L76,151.6 L79,151.1 L82,150.2 L85,148.8 L88,147.3 L91,145.9 L94,144.9 L97,144.4 L100,144.2 L103,144.0 L106,143.8 L109,143.5 L112,143.1 L115,142.7 L118,142.2 L121,141.9 L124,141.4 L127,140.8 L130,140.1 L133,139.5 L136,139.1 L139,138.9 L142,139.0 L145,139.3 L148,139.8 L151,140.4 L154,141.0 L157,141.6 L160,142.1 L163,142.5 L166,142.6 L169,142.5 L172,142.1 L175,141.5 L178,141.5 L181,142.0 L184,142.9 L187,144.1 L190,145.4 L193,146.6 L196,147.5 L199,148.1 L202,148.1 L205,147.7 L208,147.5 L211,147.5 L214,147.8 L217,148.6 L220,149.7 L223,151.3 L226,153.2 L229,155.2 L232,157.4 L235,159.4 L238,161.1 L241,162.5 L244,163.4 L247,163.8 L250,163.8 L253,163.4 L256,162.9 L259,162.5 L262,162.4 L265,162.6 L268,163.0 L271,163.5 L274,164.2 L277,164.8 L280,165.4 L283,165.7 L286,165.9 L289,165.9 L292,165.7 L295,165.6 L298,165.5 L301,165.6 L304,165.9 L307,166.5 L310,167.2 L313,168.1 L316,169.0 L319,169.9 L322,170.6 L325,171.2 L328,171.5 L331,171.6 L334,171.5 L337,171.2 L340,171.0 L343,170.8 L346,170.8 L349,170.9 L352,171.1 L355,171.4 L358,171.7 L361,171.8 L364,171.8 L367,171.5 L370,171.0 L373,170.3 L376,169.6 L379,168.8 L382,168.1 L385,167.7 L388,167.6 L391,167.8 L394,168.3 L397,169.0 L400,169.8 L403,170.6 L406,171.3 L409,171.7 L412,172.0 L415,172.0 L418,171.8 L421,171.6 L424,171.3 L427,171.2 L430,171.2 L433,171.4 L436,171.6 L439,172.0 M-5,145.6 L-2,145.0 L1,144.7 L4,144.8 L7,145.5 L10,146.5 L13,147.8 L16,149.2 L19,150.5 L22,151.7 L25,152.7 L28,153.5 L31,154.0 L34,154.4 L37,154.7 L40,154.9 L43,155.2 L46,155.5 L49,156.0 L52,156.4 L55,156.6 L58,156.7 L61,156.4 L64,155.9 L67,155.1 L70,154.2 L73,153.1 L76,152.2 L79,151.4 L82,150.5 L85,149.7 L88,149.0 L91,148.5 L94,148.3 L97,148.4 L100,148.5 L103,148.4 L106,147.9 L109,147.2 L112,146.5 L115,145.7 L118,145.2 L121,145.0 L124,145.1 L127,145.3 L130,145.5 L133,145.8 L136,146.2 L139,146.4 L142,146.5 L145,146.4 L148,146.1 L151,145.7 L154,145.1 L157,144.7 L160,144.4 L163,144.3 L166,144.4 L169,144.5 L172,144.6 L175,144.8 L178,145.3 L181,146.1 L184,147.1 L187,148.0 L190,148.8 L193,149.4 L196,149.7 L199,149.8 L202,149.7 L205,149.6 L208,149.9 L211,150.7 L214,152.0 L217,153.6 L220,155.4 L223,157.3 L226,159.0 L229,160.6 L232,161.8 L235,162.7 L238,163.3 L241,163.6 L244,163.6 L247,163.6 L250,163.5 L253,163.4 L256,163.4 L259,163.6 L262,164.0 L265,164.3 L268,164.7 L271,164.9 L274,165.0 L277,165.0 L280,164.8 L283,164.7 L286,164.7 L289,164.9 L292,165.4 L295,166.1 L298,167.1 L301,168.2 L304,169.3 L307,170.4 L310,171.3 L313,171.8 L316,172.1 L319,172.1 L322,171.9 L325,171.6 L328,171.3 L331,171.0 L334,170.9 L337,170.9 L340,171.1 L343,171.4 L346,171.7 L349,171.9 L352,172.0 L355,171.9 L358,171.5 L361,170.9 L364,170.1 L367,169.4 L370,168.7 L373,168.3 L376,168.2 L379,168.3 L382,168.8 L385,169.5 L388,170.3 L391,171.2 L394,171.9 L397,172.4 L400,172.7 L403,172.7 L406,172.6 L409,172.3 L412,172.0 L415,171.8 L418,171.7 L421,171.8 L424,172.1 L427,172.4 L430,172.7 L433,172.9 L436,172.9 L439,172.7 M-5,148.8 L-2,149.2 L1,149.7 L4,150.3 L7,151.0 L10,151.8 L13,152.6 L16,153.3 L19,154.1 L22,154.8 L25,155.6 L28,156.5 L31,157.5 L34,158.4 L37,159.4 L40,160.1 L43,160.7 L46,161.1 L49,161.1 L52,160.7 L55,160.0 L58,159.0 L61,157.8 L64,156.5 L67,155.4 L70,154.5 L73,153.9 L76,153.6 L79,153.7 L82,153.7 L85,153.6 L88,153.4 L91,153.0 L94,152.7 L97,152.5 L100,152.1 L103,151.6 L106,151.0 L109,150.5 L112,150.2 L115,150.2 L118,150.6 L121,151.2 L124,152.0 L127,152.6 L130,152.9 L133,152.9 L136,152.5 L139,151.8 L142,150.8 L145,149.8 L148,148.7 L151,147.8 L154,147.3 L157,147.1 L160,147.3 L163,147.8 L166,148.5 L169,149.1 L172,149.4 L175,149.5 L178,149.7 L181,150.0 L184,150.3 L187,150.7 L190,151.2 L193,151.8 L196,152.5 L199,153.3 L202,154.1 L205,155.0 L208,156.1 L211,157.3 L214,158.6 L217,159.7 L220,160.7 L223,161.4 L226,162.0 L229,162.4 L232,162.6 L235,162.9 L238,163.3 L241,163.7 L244,164.1 L247,164.6 L250,165.0 L253,165.2 L256,165.3 L259,165.3 L262,165.2 L265,165.0 L268,164.7 L271,164.5 L274,164.3 L277,164.4 L280,164.8 L283,165.5 L286,166.5 L289,167.6 L292,168.9 L295,170.2 L298,171.3 L301,172.1 L304,172.7 L307,172.8 L310,172.7 L313,172.3 L316,171.9 L319,171.5 L322,171.2 L325,171.1 L328,171.2 L331,171.4 L334,171.7 L337,172.0 L340,172.1 L343,172.0 L346,171.7 L349,171.3 L352,170.6 L355,170.0 L358,169.4 L361,168.9 L364,168.8 L367,168.9 L370,169.4 L373,170.0 L376,170.9 L379,171.7 L382,172.5 L385,173.1 L388,173.4 L391,173.5 L394,173.3 L397,173.1 L400,172.8 L403,172.5 L406,172.3 L409,172.4 L412,172.5 L415,172.8 L418,173.1 L421,173.3 L424,173.3 L427,173.1 L430,172.7 L433,172.1 L436,171.3 L439,170.4 M-5,154.9 L-2,155.2 L1,155.3 L4,155.4 L7,155.5 L10,155.8 L13,156.3 L16,157.1 L19,158.1 L22,159.3 L25,160.6 L28,162.0 L31,163.1 L34,164.0 L37,164.5 L40,164.5 L43,164.1 L46,163.4 L49,162.4 L52,161.2 L55,160.1 L58,159.1 L61,158.3 L64,157.9 L67,157.6 L70,157.7 L73,157.8 L76,158.1 L79,158.3 L82,158.2 L85,157.9 L88,157.2 L91,156.6 L94,156.0 L97,155.8 L100,155.8 L103,155.9 L106,156.2 L109,156.6 L112,157.0 L115,157.5 L118,158.0 L121,158.3 L124,158.4 L127,158.0 L130,157.3 L133,156.2 L136,155.1 L139,153.9 L142,152.9 L145,152.2 L148,151.7 L151,151.6 L154,151.8 L157,152.1 L160,152.7 L163,153.2 L166,153.5 L169,153.6 L172,153.4 L175,153.1 L178,153.0 L181,153.2 L184,153.8 L187,154.8 L190,156.1 L193,157.5 L196,158.9 L199,160.1 L202,161.1 L205,161.6 L208,162.0 L211,162.3 L214,162.3 L217,162.3 L220,162.3 L223,162.3 L226,162.5 L229,162.9 L232,163.5 L235,164.3 L238,165.0 L241,165.8 L244,166.3 L247,166.6 L250,166.6 L253,166.3 L256,165.9 L259,165.4 L262,165.0 L265,164.9 L268,165.1 L271,165.6 L274,166.4 L277,167.4 L280,168.7 L283,169.9 L286,171.1 L289,172.0 L292,172.7 L295,173.0 L298,173.0 L301,172.9 L304,172.5 L307,172.2 L310,171.9 L313,171.7 L316,171.6 L319,171.8 L322,172.0 L325,172.2 L328,172.3 L331,172.2 L334,172.0 L337,171.6 L340,171.0 L343,170.4 L346,169.9 L349,169.5 L352,169.3 L355,169.5 L358,169.9 L361,170.6 L364,171.5 L367,172.3 L370,173.1 L373,173.8 L376,174.1 L379,174.3 L382,174.1 L385,173.9 L388,173.5 L391,173.2 L394,173.0 L397,172.9 L400,173.0 L403,173.2 L406,173.5 L409,173.7 L412,173.7 L415,173.6 L418,173.2 L421,172.6 L424,171.9 L427,171.1 L430,170.3 L433,169.7 L436,169.4 L439,169.4 M-5,159.9 L-2,159.7 L1,159.6 L4,159.8 L7,160.2 L10,161.0 L13,162.0 L16,163.2 L19,164.4 L22,165.4 L25,166.3 L28,166.8 L31,166.9 L34,166.6 L37,165.9 L40,165.1 L43,164.2 L46,163.3 L49,162.7 L52,162.3 L55,162.1 L58,162.1 L61,162.2 L64,162.3 L67,162.4 L70,162.5 L73,162.4 L76,162.2 L79,161.9 L82,161.6 L85,161.2 L88,160.9 L91,160.8 L94,161.1 L97,161.7 L100,162.4 L103,163.0 L106,163.4 L109,163.6 L112,163.5 L115,163.1 L118,162.5 L121,161.7 L124,160.9 L127,160.0 L130,159.1 L133,158.3 L136,157.8 L139,157.5 L142,157.3 L145,157.3 L148,157.4 L151,157.5 L154,157.5 L157,157.5 L160,157.4 L163,157.4 L166,157.4 L169,157.4 L172,157.5 L175,157.8 L178,158.5 L181,159.5 L184,160.8 L187,162.2 L190,163.5 L193,164.6 L196,165.3 L199,165.5 L202,165.3 L205,164.8 L208,164.2 L211,163.8 L214,163.5 L217,163.5 L220,163.7 L223,164.3 L226,164.9 L229,165.7 L232,166.4 L235,166.9 L238,167.3 L241,167.4 L244,167.3 L247,167.1 L250,166.8 L253,166.5 L256,166.4 L259,166.7 L262,167.3 L265,168.1 L268,169.2 L271,170.3 L274,171.3 L277,172.2 L280,172.8 L283,173.2 L286,173.2 L289,173.1 L292,172.8 L295,172.5 L298,172.2 L301,172.1 L304,172.1 L307,172.3 L310,172.5 L313,172.7 L316,172.8 L319,172.7 L322,172.5 L325,172.1 L328,171.5 L331,170.9 L334,170.4 L337,170.0 L340,169.8 L343,170.0 L346,170.4 L349,171.1 L352,172.0 L355,172.9 L358,173.8 L361,174.5 L364,174.9 L367,175.0 L370,174.9 L373,174.7 L376,174.3 L379,173.9 L382,173.6 L385,173.5 L388,173.5 L391,173.7 L394,173.9 L397,174.1 L400,174.2 L403,174.1 L406,173.8 L409,173.2 L412,172.5 L415,171.7 L418,171.0 L421,170.4 L424,170.0 L427,170.0 L430,170.3 L433,170.8 L436,171.5 L439,172.3 M-5,164.8 L-2,165.1 L1,165.6 L4,166.3 L7,167.0 L10,167.8 L13,168.4 L16,168.8 L19,168.9 L22,168.8 L25,168.4 L28,167.8 L31,167.2 L34,166.6 L37,166.2 L40,165.9 L43,165.9 L46,166.0 L49,166.3 L52,166.6 L55,166.8 L58,166.9 L61,166.9 L64,166.6 L67,166.3 L70,166.0 L73,165.8 L76,165.7 L79,165.9 L82,166.2 L85,166.7 L88,167.2 L91,167.7 L94,168.2 L97,168.6 L100,168.8 L103,168.5 L106,167.9 L109,167.1 L112,166.1 L115,165.1 L118,164.3 L121,163.7 L124,163.3 L127,163.2 L130,163.2 L133,163.3 L136,163.4 L139,163.4 L142,163.3 L145,163.1 L148,162.7 L151,162.4 L154,162.0 L157,161.9 L160,162.0 L163,162.4 L166,163.1 L169,163.9 L172,164.8 L175,165.7 L178,166.6 L181,167.4 L184,168.0 L187,168.4 L190,168.4 L193,168.2 L196,167.8 L199,167.3 L202,166.7 L205,166.2 L208,166.0 L211,166.1 L214,166.4 L217,166.9 L220,167.4 L223,167.8 L226,168.2 L229,168.3 L232,168.3 L235,168.2 L238,168.1 L241,168.1 L244,168.2 L247,168.5 L250,169.1 L253,169.8 L256,170.6 L259,171.6 L262,172.5 L265,173.3 L268,173.8 L271,174.0 L274,174.0 L277,173.8 L280,173.4 L283,173.0 L286,172.6 L289,172.5 L292,172.4 L295,172.6 L298,172.8 L301,173.1 L304,173.3 L307,173.4 L310,173.2 L313,172.9 L316,172.3 L319,171.7 L322,171.2 L325,170.7 L328,170.5 L331,170.6 L334,171.0 L337,171.6 L340,172.5 L343,173.4 L346,174.3 L349,175.1 L352,175.6 L355,175.8 L358,175.8 L361,175.5 L364,175.1 L367,174.7 L370,174.3 L373,174.1 L376,174.0 L379,174.1 L382,174.3 L385,174.5 L388,174.6 L391,174.6 L394,174.3 L397,173.9 L400,173.2 L403,172.5 L406,171.7 L409,171.1 L412,170.7 L415,170.6 L418,170.9 L421,171.4 L424,172.1 L427,173.0 L430,173.8 L433,174.5 L436,174.9 L439,175.2 M-5,171.7 L-2,172.2 L1,172.5 L4,172.6 L7,172.4 L10,172.0 L13,171.5 L16,170.7 L19,170.0 L22,169.4 L25,169.0 L28,168.9 L31,169.0 L34,169.3 L37,169.8 L40,170.2 L43,170.7 L46,170.9 L49,171.1 L52,171.0 L55,170.8 L58,170.5 L61,170.3 L64,170.2 L67,170.2 L70,170.5 L73,171.1 L76,171.7 L79,172.4 L82,173.0 L85,173.4 L88,173.5 L91,173.3 L94,172.8 L97,172.1 L100,171.2 L103,170.3 L106,169.5 L109,168.8 L112,168.4 L115,168.2 L118,168.2 L121,168.5 L124,168.8 L127,169.0 L130,169.1 L133,169.0 L136,168.8 L139,168.4 L142,168.1 L145,167.8 L148,167.6 L151,167.8 L154,168.2 L157,168.8 L160,169.7 L163,170.6 L166,171.5 L169,172.2 L172,172.6 L175,172.6 L178,172.4 L181,171.9 L184,171.4 L187,170.8 L190,170.3 L193,169.9 L196,169.7 L199,169.7 L202,169.8 L205,170.0 L208,170.3 L211,170.5 L214,170.6 L217,170.6 L220,170.4 L223,170.2 L226,170.0 L229,169.8 L232,169.9 L235,170.2 L238,170.8 L241,171.5 L244,172.5 L247,173.5 L250,174.4 L253,175.1 L256,175.5 L259,175.7 L262,175.6 L265,175.2 L268,174.7 L271,174.2 L274,173.7 L277,173.3 L280,173.2 L283,173.2 L286,173.4 L289,173.6 L292,173.8 L295,173.9 L298,173.9 L301,173.6 L304,173.2 L307,172.7 L310,172.1 L313,171.7 L316,171.4 L319,171.4 L322,171.8 L325,172.4 L328,173.2 L331,174.1 L334,175.0 L337,175.8 L340,176.3 L343,176.6 L346,176.5 L349,176.3 L352,175.9 L355,175.4 L358,175.0 L361,174.7 L364,174.6 L367,174.7 L370,174.8 L373,175.0 L376,175.1 L379,175.1 L382,174.9 L385,174.5 L388,173.9 L391,173.2 L394,172.5 L397,171.9 L400,171.5 L403,171.4 L406,171.6 L409,172.1 L412,172.8 L415,173.6 L418,174.5 L421,175.2 L424,175.7 L427,176.0 L430,176.1 L433,175.9 L436,175.6 L439,175.3 M-5,177.4 L-2,176.9 L1,176.2 L4,175.3 L7,174.4 L10,173.6 L13,172.9 L16,172.6 L19,172.5 L22,172.7 L25,173.1 L28,173.6 L31,174.1 L34,174.5 L37,174.8 L40,174.8 L43,174.7 L46,174.6 L49,174.4 L52,174.4 L55,174.4 L58,174.7 L61,175.2 L64,175.9 L67,176.6 L70,177.2 L73,177.7 L76,177.9 L79,177.8 L82,177.4 L85,176.8 L88,175.9 L91,175.1 L94,174.3 L97,173.6 L100,173.2 L103,173.1 L106,173.2 L109,173.4 L112,173.8 L115,174.1 L118,174.4 L121,174.4 L124,174.4 L127,174.2 L130,173.9 L133,173.7 L136,173.6 L139,173.7 L142,174.1 L145,174.6 L148,175.4 L151,176.2 L154,177.0 L157,177.6 L160,177.9 L163,178.0 L166,177.7 L169,177.2 L172,176.5 L175,175.7 L178,174.9 L181,174.3 L184,173.9 L187,173.8 L190,173.8 L193,174.0 L196,174.2 L199,174.4 L202,174.5 L205,174.4 L208,174.2 L211,173.8 L214,173.4 L217,173.1 L220,172.9 L223,173.0 L226,173.4 L229,174.0 L232,174.7 L235,175.6 L238,176.5 L241,177.2 L244,177.7 L247,177.9 L250,177.7 L253,177.3 L256,176.7 L259,176.1 L262,175.5 L265,175.0 L268,174.6 L271,174.5 L274,174.6 L277,174.7 L280,174.9 L283,174.9 L286,174.9 L289,174.6 L292,174.2 L295,173.7 L298,173.2 L301,172.7 L304,172.5 L307,172.4 L310,172.7 L313,173.3 L316,174.1 L319,175.0 L322,175.9 L325,176.6 L328,177.2 L331,177.5 L334,177.4 L337,177.2 L340,176.8 L343,176.2 L346,175.8 L349,175.4 L352,175.2 L355,175.2 L358,175.3 L361,175.5 L364,175.6 L367,175.6 L370,175.5 L373,175.1 L376,174.6 L379,173.9 L382,173.2 L385,172.6 L388,172.2 L391,172.1 L394,172.3 L397,172.7 L400,173.4 L403,174.3 L406,175.2 L409,175.9 L412,176.5 L415,176.9 L418,176.9 L421,176.8 L424,176.5 L427,176.1 L430,175.8 L433,175.6 L436,175.6 L439,175.7" fill="none" stroke="#66c4b4" stroke-width="0.7" opacity="0.7"/>
<path d="M-53.2,114.0 L-54.3,115.5 L-55.6,118.3 L-56.9,121.9 L-58.5,126.1 L-60.2,130.9 L-62.1,136.3 L-64.1,142.1 L-66.4,148.3 L-68.8,154.9 L-71.3,161.9 L-73.8,169.3 L-76.4,177.0 M-47.4,114.0 L-44.6,115.5 L-42.0,118.3 L-39.5,121.9 L-37.2,126.1 L-35.1,130.9 L-33.2,136.3 L-31.5,142.1 L-29.8,148.3 L-28.2,154.9 L-26.6,161.9 L-25.0,169.3 L-23.3,177.0 M-42.1,114.0 L-43.8,115.5 L-45.7,118.3 L-47.8,121.9 L-50.1,126.1 L-52.5,130.9 L-54.9,136.3 L-57.5,142.1 L-60.1,148.3 L-62.6,154.9 L-65.1,161.9 L-67.5,169.3 L-69.7,177.0 M-37.6,114.0 L-35.5,115.5 L-33.6,118.3 L-31.8,121.9 L-30.1,126.1 L-28.5,130.9 L-26.9,136.3 L-25.3,142.1 L-23.6,148.3 L-21.8,154.9 L-19.9,161.9 L-17.8,169.3 L-15.5,177.0 M-33.7,114.0 L-36.1,115.5 L-38.6,118.3 L-41.2,121.9 L-43.8,126.1 L-46.3,130.9 L-48.8,136.3 L-51.2,142.1 L-53.4,148.3 L-55.5,154.9 L-57.3,161.9 L-59.0,169.3 L-60.5,177.0 M-30.4,114.0 L-28.8,115.5 L-27.3,118.3 L-25.6,121.9 L-24.0,126.1 L-22.2,130.9 L-20.2,136.3 L-18.1,142.1 L-15.8,148.3 L-13.3,154.9 L-10.7,161.9 L-7.9,169.3 L-4.9,177.0 M-27.4,114.0 L-30.0,115.5 L-32.5,118.3 L-34.8,121.9 L-37.1,126.1 L-39.1,130.9 L-41.0,136.3 L-42.7,142.1 L-44.2,148.3 L-45.5,154.9 L-46.8,161.9 L-47.9,169.3 L-49.0,177.0 M-24.3,114.0 L-22.5,115.5 L-20.6,118.3 L-18.5,121.9 L-16.2,126.1 L-13.7,130.9 L-11.0,136.3 L-8.2,142.1 L-5.3,148.2 L-2.2,154.6 L0.8,161.6 L3.9,169.1 L6.9,177.0 M-20.7,114.0 L-22.8,115.5 L-24.7,118.3 L-26.3,121.9 L-27.9,126.1 L-29.2,130.9 L-30.4,136.3 L-31.6,142.1 L-32.7,148.3 L-33.8,154.9 L-34.9,161.9 L-36.1,169.3 L-37.5,177.0 M-16.5,114.0 L-14.0,115.5 L-11.4,118.3 L-8.5,121.9 L-5.6,126.0 L-2.6,130.3 L0.5,135.4 L3.6,141.1 L6.6,147.0 L9.5,153.5 L12.4,160.6 L15.0,168.5 L17.5,177.0 M-11.5,114.0 L-12.9,115.5 L-14.1,118.3 L-15.2,121.9 L-16.3,126.1 L-17.4,130.9 L-18.6,136.3 L-19.8,142.1 L-21.1,148.3 L-22.7,154.9 L-24.3,161.9 L-26.2,169.3 L-28.3,177.0 M-5.9,113.9 L-2.9,114.7 L0.2,117.1 L3.2,120.4 L6.3,123.9 L9.2,128.0 L12.0,132.8 L14.7,138.6 L17.2,145.2 L19.5,152.5 L21.6,160.2 L23.5,168.3 L25.3,177.0 M0.0,112.7 L-1.1,114.3 L-2.2,117.4 L-3.5,121.3 L-4.8,125.9 L-6.3,130.9 L-8.0,136.3 L-9.9,142.1 L-11.9,148.3 L-14.2,154.9 L-16.5,161.9 L-19.0,169.3 L-21.6,177.0 M5.9,111.4 L8.9,111.8 L11.7,113.5 L14.3,116.5 L16.8,120.6 L19.1,125.8 L21.2,131.6 L23.2,137.7 L25.0,144.3 L26.6,151.5 L28.3,159.3 L29.8,167.8 L31.4,177.0 M11.5,108.9 L10.0,111.2 L8.3,114.9 L6.5,119.4 L4.4,124.5 L2.2,129.9 L-0.2,135.4 L-2.7,141.6 L-5.2,148.2 L-7.8,154.9 L-10.4,161.9 L-12.9,169.3 L-15.3,177.0 M16.5,107.2 L18.8,108.7 L20.9,111.6 L22.8,115.1 L24.6,119.1 L26.3,123.9 L27.9,129.3 L29.5,135.5 L31.1,142.4 L32.8,150.0 L34.6,158.3 L36.5,167.4 L38.6,177.0 M20.7,106.8 L18.5,108.7 L16.1,112.1 L13.6,116.7 L11.1,122.2 L8.5,128.3 L5.9,134.6 L3.5,141.1 L1.1,147.7 L-1.2,154.5 L-3.3,161.8 L-5.2,169.3 L-6.9,177.0 M24.3,105.5 L26.0,106.3 L27.6,108.5 L29.2,111.7 L30.8,115.8 L32.5,120.8 L34.2,126.7 L36.1,133.4 L38.2,141.0 L40.5,149.3 L43.0,157.9 L45.6,167.1 L48.4,177.0 M27.4,103.6 L24.8,107.0 L22.3,111.2 L19.8,115.7 L17.4,120.6 L15.1,126.2 L13.1,132.6 L11.2,139.3 L9.5,146.4 L7.9,153.7 L6.6,161.3 L5.3,169.0 L4.2,177.0 M30.4,101.5 L32.1,102.2 L33.9,104.7 L35.8,108.4 L37.9,113.3 L40.2,119.2 L42.6,125.5 L45.3,132.2 L48.1,139.4 L51.0,147.3 L54.0,156.1 L57.1,166.1 L60.1,177.0 M33.7,99.5 L31.5,102.6 L29.4,107.3 L27.5,112.7 L25.8,118.6 L24.3,124.8 L22.9,131.2 L21.6,138.0 L20.5,145.0 L19.4,152.5 L18.3,160.3 L17.2,168.5 L16.0,177.0 M37.6,98.1 L39.8,99.9 L42.3,102.9 L44.9,106.4 L47.7,110.5 L50.6,115.2 L53.7,120.8 L56.7,127.6 L59.8,135.7 L62.9,145.0 L65.8,155.1 L68.6,165.8 L71.3,177.0 M42.1,97.5 L40.6,99.8 L39.2,103.4 L38.0,107.9 L36.8,113.4 L35.7,119.7 L34.6,126.6 L33.5,134.1 L32.3,142.0 L31.0,150.4 L29.5,159.1 L27.8,168.0 L26.0,177.0 M47.4,94.8 L50.3,94.7 L53.3,96.2 L56.4,99.2 L59.5,103.9 L62.5,110.2 L65.5,117.9 L68.3,126.4 L71.0,135.7 L73.5,145.4 L75.8,155.6 L77.9,166.1 L79.9,177.0 M53.2,90.5 L52.1,93.4 L51.0,97.9 L49.9,103.5 L48.6,109.9 L47.3,117.0 L45.8,124.5 L44.2,132.5 L42.3,140.8 L40.3,149.3 L38.1,158.1 L35.7,167.4 L33.2,177.0 M59.1,86.6 L62.2,87.9 L65.1,91.7 L68.0,97.2 L70.6,103.7 L73.2,111.0 L75.5,119.0 L77.6,127.5 L79.6,136.5 L81.4,145.9 L83.1,155.8 L84.7,166.2 L86.3,177.0 M65.0,85.5 L63.6,87.7 L62.1,91.9 L60.5,97.5 L58.6,104.2 L56.6,111.9 L54.4,120.5 L52.0,129.5 L49.6,138.8 L47.0,148.3 L44.4,157.8 L41.9,167.3 L39.4,177.0 M70.3,86.2 L72.8,88.9 L75.1,93.3 L77.3,98.8 L79.2,105.1 L81.0,112.1 L82.7,119.7 L84.4,127.9 L85.9,136.6 L87.5,145.9 L89.2,155.7 L91.0,166.1 L92.9,177.0 M75.0,87.2 L72.9,88.9 L70.7,92.4 L68.4,97.2 L65.9,103.2 L63.4,110.1 L60.8,118.2 L58.2,127.1 L55.7,136.7 L53.3,146.6 L51.0,156.7 L48.9,166.8 L47.0,177.0 M78.9,88.0 L80.7,90.3 L82.4,94.4 L84.0,99.5 L85.6,105.4 L87.2,112.1 L88.9,119.6 L90.6,127.6 L92.5,136.3 L94.6,145.6 L96.8,155.4 L99.3,165.9 L101.9,177.0 M82.2,88.3 L79.7,90.2 L77.1,93.7 L74.5,98.3 L72.0,103.9 L69.6,110.5 L67.4,118.0 L65.3,126.3 L63.3,135.3 L61.6,145.0 L60.0,155.3 L58.6,166.0 L57.4,177.0 M85.3,88.4 L86.9,90.4 L88.5,94.2 L90.3,99.1 L92.2,104.9 L94.3,111.5 L96.5,118.8 L98.9,126.8 L101.5,135.6 L104.3,145.0 L107.2,155.1 L110.2,165.8 L113.3,177.0 M88.4,88.2 L86.0,90.5 L83.7,94.4 L81.6,99.4 L79.7,105.2 L77.9,111.8 L76.4,119.1 L75.0,127.2 L73.7,135.9 L72.6,145.3 L71.5,155.3 L70.4,165.9 L69.3,177.0 M91.9,87.7 L93.9,89.6 L96.2,93.1 L98.6,97.9 L101.2,103.6 L104.0,110.3 L106.9,117.9 L109.9,126.3 L113.0,135.4 L116.0,145.1 L119.1,155.3 L122.1,165.9 L124.9,177.0 M96.0,87.0 L94.3,89.5 L92.7,93.7 L91.3,99.0 L90.1,105.1 L88.9,112.0 L87.8,119.6 L86.7,127.8 L85.6,136.6 L84.4,145.9 L83.1,155.8 L81.6,166.1 L80.0,177.0 M100.9,86.2 L103.6,88.0 L106.6,91.8 L109.6,96.9 L112.6,103.2 L115.7,110.4 L118.8,118.3 L121.7,126.8 L124.6,135.8 L127.3,145.8 L129.8,156.6 L132.1,167.1 L134.3,177.0 M106.4,85.6 L105.2,87.9 L104.1,92.0 L103.0,97.3 L101.9,103.5 L100.7,110.6 L99.4,118.5 L97.9,126.9 L96.3,136.0 L94.5,145.6 L92.5,155.6 L90.3,166.1 L88.0,177.0 M112.3,85.6 L115.4,88.0 L118.4,92.3 L121.4,97.7 L124.2,103.9 L126.9,111.6 L129.5,121.6 L131.8,131.9 L134.0,141.4 L136.0,150.0 L137.8,158.6 L139.5,167.7 L141.1,177.0 M118.3,86.1 L117.1,88.2 L115.7,92.1 L114.3,97.2 L112.6,103.2 L110.8,110.1 L108.8,117.9 L106.6,126.3 L104.3,135.4 L101.8,145.1 L99.3,155.3 L96.7,166.0 L94.1,177.0 M123.9,86.5 L126.6,89.4 L129.1,96.6 L131.5,105.4 L133.6,113.6 L135.6,120.7 L137.5,127.4 L139.2,134.8 L140.8,142.8 L142.4,151.2 L144.0,159.8 L145.6,168.4 L147.4,177.0 M129.0,90.4 L127.1,89.9 L125.1,92.7 L123.0,97.8 L120.6,103.8 L118.2,110.6 L115.6,118.1 L113.0,126.3 L110.5,135.3 L108.0,144.9 L105.5,155.1 L103.2,165.8 L101.1,177.0 M133.3,98.1 L135.3,101.7 L137.1,105.3 L138.8,110.3 L140.5,116.2 L142.0,123.0 L143.6,130.2 L145.3,137.8 L147.0,145.5 L148.9,153.3 L150.9,161.1 L153.2,168.9 L155.6,177.0 M137.0,100.1 L134.5,101.3 L132.0,101.5 L129.4,101.9 L126.8,104.6 L124.3,110.8 L121.9,118.4 L119.6,126.7 L117.4,135.6 L115.5,145.1 L113.7,155.2 L112.2,165.8 L110.7,177.0 M140.1,101.5 L141.7,104.6 L143.3,109.2 L145.0,114.8 L146.7,121.0 L148.6,127.5 L150.6,134.0 L152.8,140.4 L155.2,146.7 L157.8,153.1 L160.6,160.2 L163.5,168.2 L166.5,177.0 M143.1,104.1 L140.6,103.7 L138.2,105.7 L135.9,109.6 L133.8,113.8 L131.8,117.6 L130.1,122.3 L128.5,128.5 L127.1,136.3 L125.8,145.3 L124.6,155.3 L123.5,165.9 L122.4,177.0 M146.4,107.4 L148.2,110.6 L150.3,114.9 L152.5,119.2 L154.9,123.4 L157.5,127.4 L160.2,131.8 L163.1,137.3 L166.1,144.1 L169.2,150.4 L172.3,157.2 L175.3,165.9 L178.3,177.0 M150.1,110.2 L148.2,110.6 L146.4,112.1 L144.8,114.7 L143.4,118.4 L142.1,123.0 L141.0,128.6 L139.9,135.1 L138.8,142.2 L137.7,150.1 L136.5,158.6 L135.2,167.6 L133.7,177.0 M154.6,110.7 L157.2,111.0 L159.9,112.0 L162.8,114.4 L165.8,118.7 L168.9,121.9 L171.9,124.0 L175.0,127.2 L178.0,133.1 L180.9,142.1 L183.6,152.9 L186.1,164.3 L188.5,177.0 M159.7,107.4 L158.5,110.1 L157.3,113.9 L156.2,118.4 L155.1,123.3 L154.0,128.7 L152.8,134.3 L151.5,140.3 L150.1,146.6 L148.5,153.2 L146.7,160.4 L144.7,168.3 L142.5,177.0 M165.5,104.9 L168.5,103.9 L171.6,101.3 L174.7,99.1 L177.6,99.7 L180.5,104.3 L183.2,112.1 L185.8,119.8 L188.2,127.9 L190.3,137.3 L192.3,148.6 L194.2,161.9 L195.9,177.0 M171.4,96.2 L170.3,100.6 L169.1,106.2 L167.9,112.3 L166.4,118.5 L164.8,124.4 L163.0,130.7 L161.0,137.9 L158.8,145.6 L156.5,153.5 L154.1,161.2 L151.5,168.9 L149.0,177.0 M177.3,81.9 L180.2,80.2 L182.9,83.6 L185.5,87.2 L187.8,90.5 L190.0,94.8 L192.0,100.8 L193.9,108.9 L195.6,119.2 L197.2,131.5 L198.8,145.4 L200.4,160.7 L202.0,177.0 M182.7,76.9 L181.1,79.6 L179.3,85.4 L177.3,93.8 L175.2,104.1 L172.9,115.3 L170.4,126.3 L167.9,136.0 L165.3,144.2 L162.7,151.9 L160.2,160.3 L157.8,168.7 L155.5,177.0 M187.5,70.7 L189.7,68.1 L191.7,68.0 L193.5,70.3 L195.2,75.2 L196.9,82.5 L198.5,91.9 L200.1,103.4 L201.7,116.4 L203.4,130.2 L205.3,144.8 L207.3,160.4 L209.5,177.0 M191.5,60.5 L189.2,69.3 L186.7,79.3 L184.2,88.5 L181.6,96.3 L179.1,105.4 L176.5,116.6 L174.1,128.5 L171.8,139.8 L169.6,150.1 L167.7,159.4 L165.9,168.2 L164.3,177.0 M194.9,51.7 L196.5,51.4 L198.1,54.7 L199.7,60.9 L201.4,69.6 L203.1,79.5 L205.0,90.2 L207.0,101.9 L209.2,114.6 L211.6,128.7 L214.1,144.0 L216.8,160.3 L219.7,177.0 M198.0,46.0 L195.4,53.6 L192.9,65.0 L190.4,77.6 L188.1,90.0 L186.0,101.4 L184.0,111.8 L182.2,121.5 L180.6,131.6 L179.2,142.6 L177.9,154.0 L176.7,165.5 L175.6,177.0 M201.0,44.0 L202.8,46.9 L204.6,52.1 L206.6,58.6 L208.8,66.6 L211.2,76.3 L213.8,87.8 L216.5,101.0 L219.4,115.5 L222.4,130.8 L225.4,146.4 L228.5,161.9 L231.6,177.0 M204.5,43.0 L202.3,47.1 L200.3,53.1 L198.6,61.8 L196.9,72.5 L195.5,84.4 L194.2,97.0 L193.0,110.1 L191.9,123.4 L190.9,136.8 L189.7,150.3 L188.6,163.7 L187.3,177.0 M208.5,40.5 L210.9,42.7 L213.4,48.4 L216.2,56.9 L219.1,67.8 L222.0,80.4 L225.1,94.1 L228.2,108.4 L231.2,122.6 L234.2,136.5 L237.1,150.1 L239.9,163.4 L242.4,177.0 M213.3,39.0 L211.8,42.4 L210.6,48.8 L209.4,57.2 L208.3,66.9 L207.2,77.9 L206.1,89.8 L204.9,102.6 L203.6,116.1 L202.2,130.3 L200.6,145.2 L198.8,160.9 L196.9,177.0 M218.7,41.4 L221.7,47.6 L224.8,57.1 L227.9,68.3 L230.9,80.3 L233.9,92.3 L236.8,104.0 L239.5,115.5 L242.1,126.8 L244.5,138.5 L246.7,150.8 L248.7,163.7 L250.6,177.0 M224.6,48.1 L223.5,49.8 L222.4,54.2 L221.2,60.5 L220.0,68.4 L218.5,77.8 L216.9,88.5 L215.2,100.7 L213.2,114.1 L211.1,128.7 L208.8,144.3 L206.3,160.5 L203.8,177.0 M230.6,56.7 L233.6,63.5 L236.5,71.5 L239.2,79.8 L241.8,88.1 L244.2,96.6 L246.4,106.2 L248.4,116.8 L250.3,128.0 L252.0,139.7 L253.6,151.9 L255.2,164.3 L256.8,177.0 M236.3,63.7 L234.9,65.0 L233.3,68.3 L231.5,72.9 L229.5,78.7 L227.4,85.7 L225.1,94.1 L222.7,104.1 L220.1,115.8 L217.6,129.2 L215.0,144.1 L212.5,160.1 L210.0,177.0 M241.4,66.8 L243.8,69.7 L246.0,74.9 L248.1,81.8 L249.9,90.0 L251.7,99.1 L253.3,109.0 L254.9,119.4 L256.5,130.3 L258.1,141.6 L259.8,153.2 L261.7,165.1 L263.7,177.0 M245.9,67.4 L243.7,69.7 L241.4,74.3 L239.0,79.7 L236.5,85.6 L233.9,92.3 L231.3,99.9 L228.8,108.9 L226.3,119.4 L224.0,131.6 L221.8,145.3 L219.8,160.5 L218.0,177.0 M249.6,69.1 L251.3,72.8 L253.0,78.7 L254.6,85.9 L256.2,94.0 L257.8,103.0 L259.5,112.6 L261.3,122.7 L263.3,133.2 L265.5,143.8 L267.9,154.7 L270.4,165.7 L273.1,177.0 M252.8,71.3 L250.2,72.1 L247.7,75.5 L245.1,80.9 L242.7,88.2 L240.3,96.2 L238.2,104.8 L236.2,114.1 L234.4,124.4 L232.7,135.9 L231.3,148.5 L230.0,162.2 L228.8,177.0 M255.8,74.0 L257.5,77.9 L259.2,83.9 L261.0,91.1 L263.0,99.1 L265.2,107.7 L267.5,116.6 L270.1,125.8 L272.8,135.1 L275.6,144.7 L278.6,154.9 L281.7,165.6 L284.8,177.0 M259.0,76.9 L256.7,77.2 L254.5,79.9 L252.5,84.3 L250.7,90.4 L249.1,97.9 L247.6,106.6 L246.3,116.3 L245.1,127.0 L244.0,138.5 L242.9,150.7 L241.8,163.5 L240.7,177.0 M262.7,80.2 L264.8,84.2 L267.2,89.8 L269.7,96.0 L272.5,102.7 L275.3,109.7 L278.3,117.3 L281.3,125.4 L284.4,134.3 L287.5,143.9 L290.5,154.2 L293.4,165.3 L296.2,177.0 M267.0,83.3 L265.4,84.6 L264.0,87.8 L262.6,92.3 L261.5,98.0 L260.3,104.8 L259.3,112.5 L258.2,121.1 L257.0,130.5 L255.7,140.9 L254.3,152.0 L252.7,164.1 L251.0,177.0 M272.1,85.0 L275.0,87.2 L278.0,90.9 L281.0,95.7 L284.1,101.4 L287.2,108.0 L290.2,115.5 L293.1,124.0 L295.8,133.3 L298.4,143.4 L300.8,153.9 L303.1,165.1 L305.1,177.0 M277.8,84.6 L276.7,87.0 L275.6,91.2 L274.5,96.5 L273.3,102.7 L272.1,109.7 L270.7,117.4 L269.1,125.6 L267.3,134.4 L265.4,143.8 L263.3,154.0 L261.0,165.0 L258.6,177.0 M283.8,83.4 L286.8,84.9 L289.8,88.4 L292.7,93.4 L295.5,99.6 L298.1,106.8 L300.5,114.7 L302.7,123.1 L304.8,132.3 L306.7,142.3 L308.4,153.2 L310.1,164.8 L311.7,177.0 M289.7,82.0 L288.4,84.6 L287.0,89.1 L285.4,94.8 L283.7,101.5 L281.7,108.9 L279.6,117.1 L277.3,125.8 L274.9,135.1 L272.4,144.7 L269.8,154.9 L267.3,165.5 L264.7,177.0 M295.2,81.1 L297.7,83.3 L300.2,87.3 L302.4,92.1 L304.4,97.9 L306.3,104.7 L308.1,112.7 L309.7,121.6 L311.3,131.4 L312.9,142.0 L314.5,153.1 L316.3,164.8 L318.1,177.0 M300.0,80.8 L298.1,83.3 L295.9,87.6 L293.7,93.3 L291.3,100.0 L288.7,107.7 L286.2,116.1 L283.6,125.1 L281.0,134.7 L278.6,144.6 L276.2,154.9 L274.0,165.7 L272.0,177.0 M304.1,79.2 L306.0,80.7 L307.8,84.3 L309.4,89.6 L311.0,96.2 L312.6,103.9 L314.2,112.5 L315.9,121.7 L317.7,131.7 L319.7,142.3 L321.9,153.4 L324.2,165.0 L326.7,177.0 M307.6,77.6 L305.1,81.1 L302.5,86.5 L299.9,92.8 L297.4,99.5 L294.9,106.9 L292.6,115.2 L290.4,124.2 L288.4,133.8 L286.5,144.0 L284.9,154.5 L283.4,165.6 L282.1,177.0 M310.7,77.0 L312.3,79.4 L313.9,83.9 L315.6,89.8 L317.4,96.7 L319.4,104.6 L321.5,113.3 L323.9,122.6 L326.4,132.5 L329.1,142.9 L331.9,153.8 L334.9,165.1 L337.9,177.0 M313.7,77.1 L311.3,79.4 L308.9,84.0 L306.7,90.4 L304.7,97.8 L302.9,105.9 L301.2,114.6 L299.7,123.7 L298.4,133.3 L297.2,143.4 L296.1,154.0 L295.0,165.3 L293.9,177.0 M317.1,77.5 L319.0,80.3 L321.2,85.0 L323.5,91.1 L326.0,98.1 L328.7,105.9 L331.6,114.3 L334.5,123.2 L337.6,133.0 L340.7,143.4 L343.7,154.3 L346.7,165.6 L349.7,177.0 M321.0,78.3 L319.2,80.3 L317.5,84.4 L316.1,89.8 L314.7,96.4 L313.5,104.0 L312.4,112.4 L311.3,121.6 L310.2,131.4 L309.1,142.0 L307.8,153.2 L306.4,164.9 L304.9,177.0 M325.7,79.3 L328.4,82.0 L331.2,86.6 L334.2,92.2 L337.2,99.0 L340.3,106.9 L343.4,115.7 L346.4,125.1 L349.3,134.9 L352.1,145.0 L354.7,155.4 L357.2,166.0 L359.4,177.0 M331.1,79.9 L329.9,82.2 L328.7,86.3 L327.7,91.8 L326.6,98.2 L325.4,105.5 L324.2,113.6 L322.8,122.5 L321.2,132.0 L319.5,142.3 L317.6,153.2 L315.5,164.8 L313.2,177.0 M336.9,80.3 L340.0,83.3 L343.1,88.5 L346.1,94.9 L349.0,102.2 L351.8,110.1 L354.4,118.5 L356.8,127.2 L359.1,136.3 L361.2,145.8 L363.1,155.7 L364.8,166.1 L366.5,177.0 M342.9,82.0 L341.7,83.9 L340.5,87.7 L339.1,92.8 L337.6,99.0 L335.8,106.2 L333.9,114.3 L331.8,123.2 L329.6,132.7 L327.2,142.8 L324.7,153.6 L322.1,165.0 L319.5,177.0 M348.7,84.3 L351.4,87.6 L354.1,92.5 L356.5,98.3 L358.8,104.8 L360.8,111.9 L362.7,119.5 L364.5,127.7 L366.2,136.5 L367.8,145.9 L369.4,155.9 L371.0,166.2 L372.7,177.0 M353.9,86.3 L352.2,87.9 L350.3,91.2 L348.2,95.7 L345.9,101.2 L343.5,107.7 L341.0,115.2 L338.4,123.6 L335.9,132.9 L333.3,143.0 L330.8,153.8 L328.5,165.1 L326.3,177.0 M358.4,87.5 L360.5,90.0 L362.4,94.0 L364.2,99.1 L365.8,105.2 L367.4,112.2 L369.0,119.9 L370.6,128.2 L372.3,137.1 L374.1,146.5 L376.1,156.4 L378.2,166.6 L380.5,177.0 M362.2,88.0 L359.8,89.9 L357.3,93.4 L354.8,97.9 L352.2,103.3 L349.6,109.5 L347.2,116.7 L344.8,124.7 L342.6,133.6 L340.5,143.4 L338.7,154.0 L337.0,165.2 L335.5,177.0 M365.5,88.1 L367.1,90.4 L368.7,94.6 L370.3,99.9 L372.0,106.2 L373.8,113.4 L375.8,121.2 L377.9,129.6 L380.2,138.5 L382.7,147.8 L385.3,157.4 L388.2,167.2 L391.1,177.0 M368.5,88.5 L366.0,90.3 L363.5,94.1 L361.1,99.1 L358.9,104.8 L356.9,111.4 L355.0,118.6 L353.3,126.6 L351.8,135.3 L350.5,144.8 L349.3,154.9 L348.1,165.6 L347.1,177.0 M371.7,89.3 L373.5,91.9 L375.4,96.4 L377.5,102.1 L379.8,108.7 L382.3,116.1 L385.0,124.0 L387.8,132.3 L390.8,141.0 L393.8,149.8 L396.9,158.7 L400.0,167.8 L403.0,177.0 M375.3,90.5 L373.2,91.8 L371.3,95.2 L369.7,99.8 L368.2,105.5 L366.8,112.1 L365.6,119.5 L364.5,127.7 L363.4,136.4 L362.3,145.8 L361.2,155.7 L359.9,166.1 L358.6,177.0 M379.5,92.3 L382.0,95.5 L384.7,100.4 L387.5,106.4 L390.4,113.0 L393.5,120.1 L396.6,127.5 L399.6,135.1 L402.7,143.0 L405.6,151.0 L408.4,159.3 L411.0,168.0 L413.5,177.0 M384.5,94.7 L383.2,96.1 L381.9,99.1 L380.8,103.4 L379.7,108.7 L378.6,114.8 L377.5,121.7 L376.3,129.2 L374.9,137.5 L373.4,146.4 L371.7,156.0 L369.8,166.2 L367.7,177.0 M390.1,97.6 L393.1,100.9 L396.2,105.5 L399.3,110.9 L402.3,116.6 L405.3,122.7 L408.1,129.2 L410.7,136.0 L413.2,143.4 L415.4,151.3 L417.5,159.6 L419.5,168.2 L421.3,177.0 M396.1,100.3 L395.0,101.7 L393.8,104.6 L392.6,108.5 L391.2,113.3 L389.7,118.8 L388.0,125.0 L386.1,131.8 L384.0,139.4 L381.8,147.7 L379.4,156.7 L376.9,166.5 L374.4,177.0 M402.0,102.2 L404.9,104.5 L407.7,108.0 L410.4,112.3 L412.8,117.4 L415.1,123.4 L417.2,129.9 L419.1,136.9 L420.9,144.3 L422.6,152.0 L424.2,160.1 L425.8,168.4 L427.4,177.0 M407.6,103.0 L406.0,104.6 L404.3,107.7 L402.4,111.6 L400.4,116.2 L398.1,121.5 L395.8,127.3 L393.3,133.8 L390.7,140.9 L388.1,148.8 L385.6,157.4 L383.1,166.8 L380.7,177.0 M412.5,103.2 L414.8,105.3 L416.9,109.0 L418.8,113.6 L420.6,118.9 L422.3,124.8 L423.9,131.2 L425.5,138.1 L427.1,145.3 L428.7,152.8 L430.5,160.6 L432.5,168.7 L434.6,177.0 M416.7,104.0 L414.5,105.3 L412.1,108.2 L409.6,112.3 L407.0,117.2 L404.5,122.6 L401.9,128.6 L399.4,135.1 L397.0,142.2 L394.8,149.9 L392.7,158.3 L390.8,167.3 L389.1,177.0 M420.3,105.0 L421.9,107.2 L423.5,110.9 L425.1,115.5 L426.7,120.7 L428.4,126.5 L430.2,132.7 L432.1,139.4 L434.2,146.4 L436.5,153.6 L439.0,161.1 L441.6,168.9 L444.4,177.0 M423.4,106.0 L420.8,106.9 L418.2,109.3 L415.7,112.9 L413.4,117.5 L411.1,123.0 L409.1,129.2 L407.2,135.9 L405.5,143.2 L404.0,150.9 L402.6,159.1 L401.4,167.8 L400.2,177.0 M426.4,107.1 L428.1,109.4 L429.9,113.1 L431.8,117.5 L433.9,122.6 L436.2,128.2 L438.6,134.1 L441.3,140.4 L444.1,146.9 L447.0,153.9 L450.0,161.2 L453.1,168.9 L456.2,177.0 M429.7,108.3 L427.5,109.2 L425.4,111.6 L423.5,115.0 L421.8,119.3 L420.3,124.4 L418.9,130.2 L417.7,136.6 L416.5,143.7 L415.5,151.3 L414.4,159.4 L413.2,168.0 L412.0,177.0 M433.6,109.6 L435.8,111.8 L438.3,115.1 L441.0,119.2 L443.8,123.7 L446.7,128.8 L449.7,134.3 L452.8,140.4 L455.9,146.9 L458.9,153.9 L461.8,161.2 L464.7,168.9 L467.3,177.0 M438.1,110.6 L436.6,111.9 L435.3,114.6 L434.0,118.1 L432.9,122.4 L431.8,127.3 L430.7,132.8 L429.6,138.9 L428.3,145.5 L427.0,152.6 L425.5,160.2 L423.8,168.3 L422.0,177.0 M443.4,111.0 L446.4,112.6 L449.4,115.5 L452.5,119.2 L455.5,123.7 L458.6,128.8 L461.5,134.3 L464.3,140.4 L467.0,146.9 L469.5,153.9 L471.8,161.2 L473.9,168.9 L475.9,177.0 M449.2,111.0 L448.1,112.6 L447.0,115.5 L445.9,119.2 L444.7,123.7 L443.3,128.8 L441.8,134.3 L440.2,140.3 L438.3,146.8 L436.2,153.6 L434.0,160.9 L431.7,168.7 L429.2,177.0 M455.2,111.0 L458.2,112.6 L461.2,115.5 L464.0,119.2 L466.7,123.7 L469.2,128.8 L471.5,134.3 L473.6,140.4 L475.5,146.9 L477.3,153.9 L479.0,161.2 L480.6,168.9 L482.2,177.0 M461.0,111.0 L459.7,112.6 L458.2,115.5 L456.5,119.2 L454.6,123.7 L452.6,128.8 L450.4,134.3 L448.0,140.4 L445.5,146.9 L443.0,153.9 L440.4,161.2 L437.8,168.9 L435.3,177.0 M466.3,111.0 L468.8,112.6 L471.1,115.5 L473.2,119.2 L475.2,123.7 L477.0,128.8 L478.7,134.3 L480.3,140.4 L481.9,146.9 L483.5,153.9 L485.2,161.2 L486.9,168.9 L488.8,177.0 M471.0,111.0 L468.9,112.6 L466.7,115.5 L464.3,119.2 L461.9,123.7 L459.3,128.8 L456.7,134.3 L454.2,140.4 L451.7,146.9 L449.3,153.9 L447.0,161.2 L444.9,168.9 L443.0,177.0 M474.9,111.0 L476.7,112.6 L478.4,115.5 L480.0,119.2 L481.6,123.7 L483.2,128.8 L484.8,134.3 L486.6,140.4 L488.5,146.9 L490.6,153.9 L492.8,161.2 L495.3,168.9 L497.9,177.0 M478.2,111.0 L475.6,112.6 L473.1,115.5 L470.5,119.2 L468.0,123.7 L465.6,128.8 L463.3,134.3 L461.2,140.4 L459.3,146.9 L457.6,153.9 L456.1,161.2 L454.7,168.9 L453.4,177.0 M481.2,111.0 L482.8,112.6 L484.5,115.5 L486.3,119.2 L488.2,123.7 L490.2,128.8 L492.5,134.3 L494.9,140.4 L497.6,146.9 L500.4,153.9 L503.3,161.2 L506.3,168.9 L509.4,177.0 M484.3,111.0 L481.9,112.6 L479.7,115.5 L477.6,119.2 L475.7,123.7 L473.9,128.8 L472.4,134.3 L471.0,140.4 L469.8,146.9 L468.6,153.9 L467.5,161.2 L466.4,168.9 L465.3,177.0 M487.8,111.0 L489.9,112.6 L492.2,115.5 L494.6,119.2 L497.2,123.7 L500.0,128.8 L502.9,134.3 L506.0,140.4 L509.0,146.9 L512.1,153.9 L515.1,161.2 L518.1,168.9 L520.9,177.0 M492.0,111.0 L490.3,112.6 L488.7,115.5 L487.4,119.2 L486.1,123.7 L485.0,128.8 L483.9,134.3 L482.8,140.4 L481.6,146.9 L480.4,153.9 L479.1,161.2 L477.6,168.9 L476.0,177.0 M496.9,111.0 L499.7,112.6 L502.6,115.5 L505.6,119.2 L508.7,123.7 L511.8,128.8 L514.8,134.3 L517.8,140.4 L520.6,146.9 L523.3,153.9 L525.8,161.2 L528.1,168.9 L530.3,177.0 M502.4,111.0 L501.3,112.6 L500.2,115.5 L499.1,119.2 L498.0,123.7 L496.8,128.8 L495.4,134.3 L494.0,140.4 L492.3,146.9 L490.5,153.9 L488.5,161.2 L486.3,168.9 L483.9,177.0 M508.4,111.0 L511.4,112.6 L514.5,115.5 L517.4,119.2 L520.3,123.7 L523.0,128.8 L525.5,134.3 L527.8,140.4 L530.0,146.9 L531.9,153.9 L533.7,161.2 L535.4,168.9 L537.1,177.0 M514.3,111.0 L513.1,112.6 L511.8,115.5 L510.3,119.2 L508.6,123.7 L506.8,128.8 L504.8,134.3 L502.6,140.4 L500.2,146.9 L497.8,153.9 L495.2,161.2 L492.7,168.9 L490.1,177.0" fill="none" stroke="#58aea0" stroke-width="0.5" opacity="0.35"/>
<ellipse cx="80" cy="120" rx="40" ry="15" fill="#182024" opacity="0.7" filter="url(#b2)"/>
<ellipse cx="163" cy="122" rx="14" ry="9" fill="#182024" opacity="0.45" filter="url(#b2)"/>
<polygon points="205.0,111.0 221.0,110.0 229.0,171.0 198.0,171.0" fill="#9a8478" filter="url(#b1)"/>
<ellipse cx="215" cy="132" rx="5" ry="14" fill="#c0a494" opacity="0.6" filter="url(#b2)"/>
<polygon points="314.0,103.0 327.0,100.0 337.0,113.0 341.0,171.0 313.0,171.0 310.0,131.0" fill="#a89284" filter="url(#b1)"/>
<ellipse cx="323" cy="132" rx="5" ry="18" fill="#c4ae9f" opacity="0.5" filter="url(#b2)"/>
<polygon points="248.0,4.0 265.0,5.0 279.0,13.0 292.0,34.0 303.0,59.0 313.0,78.0 323.0,95.0 301.0,99.0 283.0,103.0 259.0,132.0 253.0,157.0 239.0,161.0 221.0,157.0 215.0,132.0 211.0,97.0 211.0,67.0 214.0,37.0 221.0,20.0 233.0,9.0" fill="#0b0d12" filter="url(#b1)"/>
<polygon points="225.0,171.0 229.0,155.0 245.0,137.0 257.0,100.0 266.0,143.0 299.0,97.0 321.0,101.0 318.0,171.0" fill="#14302b" filter="url(#b1)"/>
<polygon points="258.0,93.0 283.0,90.0 297.0,97.0 266.0,143.0 259.0,117.0 254.0,101.0" fill="#b09080" filter="url(#b1)"/>
<polygon points="269.0,27.0 283.0,47.0 295.0,77.0 301.0,95.0 288.0,99.0 279.0,89.0 271.0,67.0" fill="#0b0d12" filter="url(#b1)"/>
<polygon points="219.0,35.0 229.0,31.0 239.0,30.0 249.0,47.0 262.0,67.0 269.0,90.0 260.0,98.0 246.0,102.0 234.0,97.0 227.0,83.0 220.0,67.0 217.0,51.0" fill="url(#fg)" filter="url(#b1)"/>
<ellipse cx="255" cy="75" rx="5" ry="7" fill="#d8b4a4" opacity="0.5" filter="url(#b2)"/>
<path d="M223 62 L230 63 M239 64 L246 63" stroke="#4a3430" stroke-width="1" opacity="0.3"/>
<ellipse cx="241" cy="88" rx="6.5" ry="2.3" fill="#c8304a" opacity="0.9"/>
<ellipse cx="241" cy="87.30000000000001" rx="3.5" ry="0.8" fill="#f0e0e0" opacity="0.6"/>
<path d="M217 67 Q221 117 243 153" stroke="#4a3428" stroke-width="2.5" fill="none" opacity="0.45" filter="url(#b1)"/>
<path d="M193,102.0 L196,102.9 L199,103.8 L202,104.7 L205,105.5 L208,106.4 L211,107.2 L214,108.0 L217,108.8 L220,109.5 L223,110.2 L226,110.8 L229,111.4 L232,111.9 L235,112.4 L238,112.8 L241,113.2 L244,113.5 L247,113.7 L250,113.9 L253,114.0 L256,114.0 L259,114.0 L262,113.9 L265,113.7 L268,113.4 L271,113.1 L274,112.8 L277,112.4 L280,111.9 L283,111.3 L286,110.7 L289,110.1 L292,109.4 L295,108.7 L298,107.9 L301,107.1 L304,106.3 L307,105.4 L310,104.6 L313,103.7 L316,102.8 L319,101.9 L322,101.0 L325,100.1 L328,99.2 L331,98.4 L334,97.5 L337,96.7 L340,95.9 L343,95.1 L346,94.4 L349,93.7 L352,93.1 M193,116.8 L196,117.5 L199,118.3 L202,119.0 L205,119.6 L208,120.2 L211,120.8 L214,121.3 L217,121.7 L220,122.1 L223,122.4 L226,122.6 L229,122.8 L232,122.9 L235,123.0 L238,123.0 L241,122.9 L244,122.8 L247,122.5 L250,122.3 L253,121.9 L256,121.5 L259,121.0 L262,120.5 L265,119.9 L268,119.3 L271,118.7 L274,117.9 L277,117.2 L280,116.4 L283,115.6 L286,114.7 L289,113.9 L292,113.0 L295,112.1 L298,111.2 L301,110.3 L304,109.4 L307,108.5 L310,107.6 L313,106.8 L316,106.0 L319,105.2 L322,104.4 L325,103.7 L328,103.0 L331,102.3 L334,101.7 L337,101.2 L340,100.7 L343,100.3 L346,99.9 L349,99.6 L352,99.3 M193,130.1 L196,130.6 L199,131.0 L202,131.3 L205,131.6 L208,131.8 L211,131.9 L214,132.0 L217,132.0 L220,131.9 L223,131.8 L226,131.6 L229,131.4 L232,131.0 L235,130.6 L238,130.2 L241,129.7 L244,129.1 L247,128.5 L250,127.9 L253,127.2 L256,126.4 L259,125.7 L262,124.9 L265,124.0 L268,123.2 L271,122.3 L274,121.4 L277,120.5 L280,119.6 L283,118.7 L286,117.8 L289,116.9 L292,116.1 L295,115.2 L298,114.4 L301,113.6 L304,112.9 L307,112.2 L310,111.5 L313,110.9 L316,110.4 L319,109.8 L322,109.4 L325,109.0 L328,108.7 L331,108.4 L334,108.2 L337,108.1 L340,108.0 L343,108.0 L346,108.1 L349,108.2 L352,108.4 M193,141.0 L196,141.0 L199,141.0 L202,140.9 L205,140.7 L208,140.4 L211,140.1 L214,139.8 L217,139.4 L220,138.9 L223,138.3 L226,137.7 L229,137.1 L232,136.4 L235,135.7 L238,134.9 L241,134.1 L244,133.3 L247,132.4 L250,131.6 L253,130.7 L256,129.8 L259,128.9 L262,128.0 L265,127.1 L268,126.2 L271,125.4 L274,124.5 L277,123.7 L280,122.9 L283,122.1 L286,121.4 L289,120.7 L292,120.1 L295,119.5 L298,119.0 L301,118.5 L304,118.1 L307,117.8 L310,117.5 L313,117.3 L316,117.1 L319,117.0 L322,117.0 L325,117.0 L328,117.2 L331,117.3 L334,117.6 L337,117.9 L340,118.3 L343,118.7 L346,119.2 L349,119.7 L352,120.3 M193,148.9 L196,148.5 L199,148.0 L202,147.5 L205,146.9 L208,146.3 L211,145.7 L214,144.9 L217,144.2 L220,143.4 L223,142.6 L226,141.7 L229,140.9 L232,140.0 L235,139.1 L238,138.2 L241,137.3 L244,136.4 L247,135.5 L250,134.6 L253,133.8 L256,133.0 L259,132.2 L262,131.4 L265,130.7 L268,130.0 L271,129.3 L274,128.7 L277,128.2 L280,127.7 L283,127.3 L286,126.9 L289,126.6 L292,126.3 L295,126.2 L298,126.0 L301,126.0 L304,126.0 L307,126.1 L310,126.3 L313,126.5 L316,126.8 L319,127.1 L322,127.5 L325,128.0 L328,128.5 L331,129.1 L334,129.7 L337,130.4 L340,131.1 L343,131.9 L346,132.7 L349,133.5 L352,134.4 M193,154.2 L196,153.4 L199,152.7 L202,151.9 L205,151.0 L208,150.2 L211,149.3 L214,148.4 L217,147.5 L220,146.6 L223,145.7 L226,144.8 L229,143.9 L232,143.1 L235,142.2 L238,141.4 L241,140.6 L244,139.9 L247,139.2 L250,138.5 L253,137.9 L256,137.4 L259,136.8 L262,136.4 L265,136.0 L268,135.7 L271,135.4 L274,135.2 L277,135.1 L280,135.0 L283,135.0 L286,135.1 L289,135.2 L292,135.4 L295,135.7 L298,136.0 L301,136.4 L304,136.8 L307,137.4 L310,137.9 L313,138.5 L316,139.2 L319,139.9 L322,140.6 L325,141.4 L328,142.2 L331,143.1 L334,143.9 L337,144.8 L340,145.7 L343,146.6 L346,147.5 L349,148.4 L352,149.3 M193,157.7 L196,156.8 L199,155.9 L202,155.0 L205,154.1 L208,153.2 L211,152.4 L214,151.5 L217,150.7 L220,149.9 L223,149.1 L226,148.4 L229,147.7 L232,147.1 L235,146.5 L238,146.0 L241,145.5 L244,145.1 L247,144.8 L250,144.5 L253,144.3 L256,144.1 L259,144.0 L262,144.0 L265,144.0 L268,144.2 L271,144.3 L274,144.6 L277,144.9 L280,145.3 L283,145.7 L286,146.2 L289,146.7 L292,147.3 L295,148.0 L298,148.7 L301,149.4 L304,150.2 L307,151.0 L310,151.8 L313,152.6 L316,153.5 L319,154.4 L322,155.3 L325,156.2 L328,157.1 L331,158.0 L334,158.9 L337,159.7 L340,160.6 L343,161.4 L346,162.2 L349,162.9 L352,163.7" fill="none" stroke="#5ab0a2" stroke-width="0.6" opacity="0.3"/>
<path d="M301,81.5 L304,80.2 L307,78.6 L310,77.5 L313,77.2 L316,77.1 L319,77.3 L322,77.7 L325,78.1 L328,78.6 L331,79.0 L334,79.2 L337,79.8 L340,80.6 L343,81.8 L346,83.1 L349,84.4 L352,85.6 L355,86.6 M301,83.5 L304,81.9 L307,80.2 L310,79.1 L313,79.0 L316,79.2 L319,79.8 L322,80.6 L325,81.4 L328,82.1 L331,82.6 L334,82.9 L337,83.3 L340,83.9 L343,84.9 L346,86.0 L349,87.2 L352,88.4 L355,89.5 M301,85.3 L304,83.9 L307,82.6 L310,82.0 L313,82.2 L316,82.7 L319,83.5 L322,84.3 L325,85.0 L328,85.5 L331,85.8 L334,85.8 L337,86.1 L340,86.7 L343,87.8 L346,89.1 L349,90.5 L352,92.0 L355,93.2 M301,88.5 L304,87.5 L307,86.4 L310,85.7 L313,85.9 L316,86.2 L319,86.7 L322,87.3 L325,87.8 L328,88.3 L331,88.7 L334,88.8 L337,89.3 L340,90.2 L343,91.4 L346,92.8 L349,94.2 L352,95.4 L355,96.3 M301,92.3 L304,91.1 L307,89.7 L310,88.8 L313,88.8 L316,89.0 L319,89.5 L322,90.2 L325,91.0 L328,91.7 L331,92.2 L334,92.5 L337,92.9 L340,93.6 L343,94.5 L346,95.5 L349,96.4 L352,97.3 L355,98.0 M301,95.2 L304,93.9 L307,92.5 L310,91.7 L313,91.8 L316,92.3 L319,93.0 L322,93.8 L325,94.5 L328,95.1 L331,95.3 L334,95.2 L337,95.3 L340,95.6 L343,96.2 L346,97.0 L349,98.0 L352,99.1 L355,100.1 M301,98.2 L304,97.0 L307,95.8 L310,95.2 L313,95.3 L316,95.7 L319,96.1 L322,96.6 L325,96.9 L328,97.1 L331,97.1 L334,96.8 L337,96.9 L340,97.4 L343,98.3 L346,99.5 L349,101.0 L352,102.4 L355,103.7 M301,101.6 L304,100.4 L307,99.0 L310,98.0 L313,97.8 L316,97.7 L319,97.9 L322,98.2 L325,98.5 L328,98.9 L331,99.1 L334,99.3 L337,99.7 L340,100.7 L343,101.9 L346,103.3 L349,104.7 L352,106.1 L355,107.1 M301,104.1 L304,102.5 L307,100.8 L310,99.6 L313,99.4 L316,99.5 L319,99.9 L322,100.6 L325,101.4 L328,102.1 L331,102.7 L334,103.1 L337,103.6 L340,104.4 L343,105.4 L346,106.6 L349,107.8 L352,108.9 L355,109.9" fill="none" stroke="#6ccab9" stroke-width="0.7" opacity="0.45"/>
<circle cx="111.5" cy="156.9" r="0.5" fill="#fff" opacity="0.9"/>
<circle cx="135.4" cy="158.5" r="0.6" fill="#fff" opacity="0.9"/>
<circle cx="114.4" cy="164.3" r="0.5" fill="#fff" opacity="0.9"/>
<circle cx="83.9" cy="162.8" r="1.0" fill="#fff" opacity="0.9"/>
<circle cx="102.8" cy="149.0" r="0.5" fill="#fff" opacity="0.9"/>
<circle cx="123.4" cy="141.2" r="0.6" fill="#fff" opacity="0.9"/>
<circle cx="143.8" cy="158.0" r="0.6" fill="#fff" opacity="0.9"/>
<circle cx="126.8" cy="125.4" r="1.0" fill="#fff" opacity="0.9"/>
<circle cx="56.9" cy="122.1" r="0.5" fill="#fff" opacity="0.9"/>
<circle cx="66.0" cy="132.1" r="0.6" fill="#fff" opacity="0.9"/>
<circle cx="139.0" cy="135.6" r="0.6" fill="#fff" opacity="0.9"/>
<circle cx="102.3" cy="153.9" r="0.6" fill="#fff" opacity="0.9"/>
<circle cx="63.0" cy="167.5" r="0.6" fill="#fff" opacity="0.9"/>
<circle cx="149.3" cy="164.0" r="0.8" fill="#fff" opacity="0.9"/>
<circle cx="45.4" cy="141.5" r="0.6" fill="#fff" opacity="0.9"/>
<circle cx="72.0" cy="137.6" r="0.5" fill="#fff" opacity="0.9"/>
<circle cx="108.6" cy="155.3" r="0.5" fill="#fff" opacity="0.9"/>
<circle cx="77.1" cy="160.5" r="1.0" fill="#fff" opacity="0.9"/>
<circle cx="119.6" cy="130.7" r="1.0" fill="#fff" opacity="0.9"/>
<circle cx="120.5" cy="124.7" r="0.5" fill="#fff" opacity="0.9"/>
<circle cx="147.4" cy="138.8" r="1.0" fill="#fff" opacity="0.9"/>
<circle cx="45.0" cy="159.0" r="0.8" fill="#fff" opacity="0.9"/>
<circle cx="84.4" cy="161.5" r="1.0" fill="#fff" opacity="0.9"/>
<circle cx="48.1" cy="130.5" r="0.6" fill="#fff" opacity="0.9"/>
<circle cx="56.1" cy="133.6" r="1.0" fill="#fff" opacity="0.9"/>
<circle cx="80.9" cy="138.7" r="0.8" fill="#fff" opacity="0.9"/>
<circle cx="128.3" cy="127.1" r="0.8" fill="#fff" opacity="0.9"/>
<circle cx="137.6" cy="123.7" r="0.5" fill="#fff" opacity="0.9"/>
<circle cx="65.9" cy="146.1" r="0.8" fill="#fff" opacity="0.9"/>
<circle cx="144.0" cy="138.0" r="0.5" fill="#fff" opacity="0.9"/>
<circle cx="77.4" cy="136.9" r="0.6" fill="#fff" opacity="0.9"/>
<circle cx="130.9" cy="151.5" r="0.8" fill="#fff" opacity="0.9"/>
<circle cx="152.6" cy="129.6" r="0.5" fill="#fff" opacity="0.9"/>
<circle cx="51.9" cy="150.2" r="1.0" fill="#fff" opacity="0.9"/>
<circle cx="46.5" cy="156.8" r="0.8" fill="#fff" opacity="0.9"/>
<circle cx="282" cy="132" r="0.9" fill="#fff"/>
<circle cx="287" cy="141" r="0.9" fill="#fff"/>
<circle cx="298" cy="142" r="0.9" fill="#fff"/>
<circle cx="310" cy="153" r="0.9" fill="#fff"/>
<circle cx="333" cy="162" r="0.9" fill="#fff"/>
<circle cx="343" cy="166" r="0.9" fill="#fff"/>
<rect x="21.5" y="18.6" width="2" height="160" fill="#fff"/>
<rect x="408.5" y="18.6" width="2" height="160" fill="#fff"/>
<rect x="21.5" y="18.6" width="195.5" height="2" fill="#fff"/>
<rect x="286" y="18.6" width="124.5" height="2" fill="#fff"/>
<rect x="49.8" y="0" width="64" height="63.3" fill="#9a1b26"/>
<path d="M72.2 47.6 H61.2 V15.6 H102.6 V47.6 H83 V34" fill="none" stroke="#fff" stroke-width="4" stroke-linecap="round" stroke-linejoin="round"/>
<circle cx="82.5" cy="32" r="7.5" fill="#fff"/>
<rect x="0.5" y="0.5" width="433" height="170" fill="none" stroke="#fff" stroke-width="1" opacity="0.8"/>
</svg>
<!--/IMG-->
<!-- Detailed -->
<div class="a" style="left:10px;top:268px;font-size:9.5px;color:#555;line-height:11px;letter-spacing:-0.25px">Detailed scores</div>
<div class="card" style="left:9px;top:288px;width:872px;height:230px"></div>

<div class="hl" style="left:19px;top:304px">Image Retouching score</div>
<div class="box" style="left:147px;top:298px;width:128px;height:23px"></div>
<div class="val" style="left:156px;top:303px;font-size:9.5px">6 709</div>

<div class="lbl" style="left:19px;top:331px">Load image</div>
<div class="box" style="left:147px;top:326px;width:128px;height:21px"></div>
<div class="val" style="left:156px;top:331px">0.346 s</div>
<div class="lbl" style="left:317px;top:331px">Adjust filters</div>
<div class="box" style="left:445px;top:326px;width:128px;height:21px"></div>
<div class="val" style="left:454px;top:331px">0.970 s</div>
<div class="lbl" style="left:616px;top:331px">Flatten image</div>
<div class="box" style="left:744px;top:326px;width:127px;height:21px"></div>
<div class="val" style="left:753px;top:331px">1.107 s</div>

<div class="lbl" style="left:19px;top:357px">Save as</div>
<div class="box" style="left:147px;top:352px;width:128px;height:21px"></div>
<div class="val" style="left:156px;top:357px">52.381 s</div>
<div class="lbl" style="left:317px;top:357px">Export image</div>
<div class="box" style="left:445px;top:352px;width:128px;height:21px"></div>
<div class="val" style="left:454px;top:357px">3.448 s</div>
<div class="lbl" style="left:616px;top:357px">Adjust GPU filters</div>
<div class="box" style="left:744px;top:352px;width:127px;height:21px"></div>
<div class="val" style="left:753px;top:357px">17.131 s</div>

<div class="hl" style="left:19px;top:393px">Batch Processing score</div>
<div class="box" style="left:147px;top:387px;width:128px;height:23px"></div>
<div class="val" style="left:156px;top:392px;font-size:9.5px">4 727</div>

<div class="lbl" style="left:19px;top:420px">Import</div>
<div class="box" style="left:147px;top:415px;width:128px;height:21px"></div>
<div class="val" style="left:156px;top:420px">2.810 s</div>
<div class="lbl" style="left:317px;top:420px">Preview</div>
<div class="box" style="left:445px;top:415px;width:128px;height:21px"></div>
<div class="val" style="left:454px;top:420px">0.680 s</div>
<div class="lbl" style="left:616px;top:420px">Apply presets</div>
<div class="box" style="left:744px;top:415px;width:127px;height:21px"></div>
<div class="val" style="left:753px;top:420px">0.560 s</div>

<div class="lbl" style="left:19px;top:446px">Edit images</div>
<div class="box" style="left:147px;top:441px;width:128px;height:21px"></div>
<div class="val" style="left:156px;top:446px">2.096 s</div>
<div class="lbl" style="left:317px;top:446px">Smart preview</div>
<div class="box" style="left:445px;top:441px;width:128px;height:21px"></div>
<div class="val" style="left:454px;top:446px">7.857 s</div>
<div class="lbl" style="left:616px;top:446px">Export</div>
<div class="box" style="left:744px;top:441px;width:127px;height:21px"></div>
<div class="val" style="left:753px;top:446px">17.636 s</div>

<div class="lbl" style="left:19px;top:472px">Enhance details</div>
<div class="box" style="left:147px;top:467px;width:128px;height:21px"></div>
<div class="val" style="left:156px;top:472px">48.927 s</div>
<div class="lbl" style="left:616px;top:472px">Face detect</div>
<div class="box" style="left:744px;top:467px;width:127px;height:21px"></div>
<div class="val" style="left:753px;top:472px">20.062 s</div>

<!-- Footer -->
<div class="a" id="ft"></div>
<svg class="a" style="left:269px;top:512px" width="12" height="10" viewBox="0 0 12 10">
<path d="M3.2 8.2 H9.2 A2 2 0 0 0 9.4 4.2 A3.1 3.1 0 0 0 3.6 3.6 A2.3 2.3 0 0 0 3.2 8.2 Z" fill="#333"/>
<path d="M6.2 7.6 V5.2 M5 6.2 L6.2 5 L7.4 6.2" stroke="#fff" stroke-width="0.9" fill="none"/>
</svg>
<svg class="a" style="left:330px;top:512px" width="10" height="11" viewBox="0 0 10 11">
<path d="M1.9 1.3 H6 L8 3.3 V9.4 H1.9 Z" fill="none" stroke="#444" stroke-width="1"/>
<path d="M5.7 1.3 V3.6 H8" fill="none" stroke="#444" stroke-width="0.8"/>
<rect x="3.8" y="5.4" width="2.2" height="2.2" fill="#444"/>
</svg>
<svg class="a" style="left:395px;top:512px" width="11" height="11" viewBox="0 0 11 11">
<path d="M5.7 1 V6.6 M3.2 4.4 L5.7 6.9 L8.2 4.4" stroke="#333" stroke-width="1.4" fill="none"/>
<rect x="1.5" y="8.1" width="8.5" height="1.4" fill="#333"/>
</svg>
<svg class="a" style="left:478px;top:513px" width="10" height="10" viewBox="0 0 10 10">
<path d="M1 1.2 H7.2 L9 3 V9 H1 Z" fill="#333"/>
<rect x="2.5" y="2.2" width="4" height="2" fill="#fff"/>
<circle cx="5" cy="6.6" r="1.2" fill="#fff"/>
</svg>
<svg class="a" style="left:561.5px;top:512px" width="11" height="11" viewBox="0 0 11 11">
<path d="M5.7 1 V6.6 M3.2 4.4 L5.7 6.9 L8.2 4.4" stroke="#333" stroke-width="1.4" fill="none"/>
<rect x="1.5" y="8.1" width="8.5" height="1.4" fill="#333"/>
</svg>
<div class="fl" style="left:284px">Publish</div>
<div class="fl" style="left:344px">Show log</div>
<div class="fl" style="left:409px">Export as File</div>
<div class="fl" style="left:492px">Export as PDF</div>
<div class="fl" style="left:576px">Export as XML</div>

<!-- scrollbar -->
<div class="a" style="left:890px;top:51px;width:10px;height:449px;background:#f0f0f0"></div>
<div class="a" style="left:891px;top:61px;width:8px;height:154px;background:#c2c2c2"></div>
<svg class="a" style="left:890px;top:52px" width="10" height="7" viewBox="0 0 10 7"><path d="M3 5 L5 2.8 L7 5 Z" fill="#888"/></svg>
</body></html>
